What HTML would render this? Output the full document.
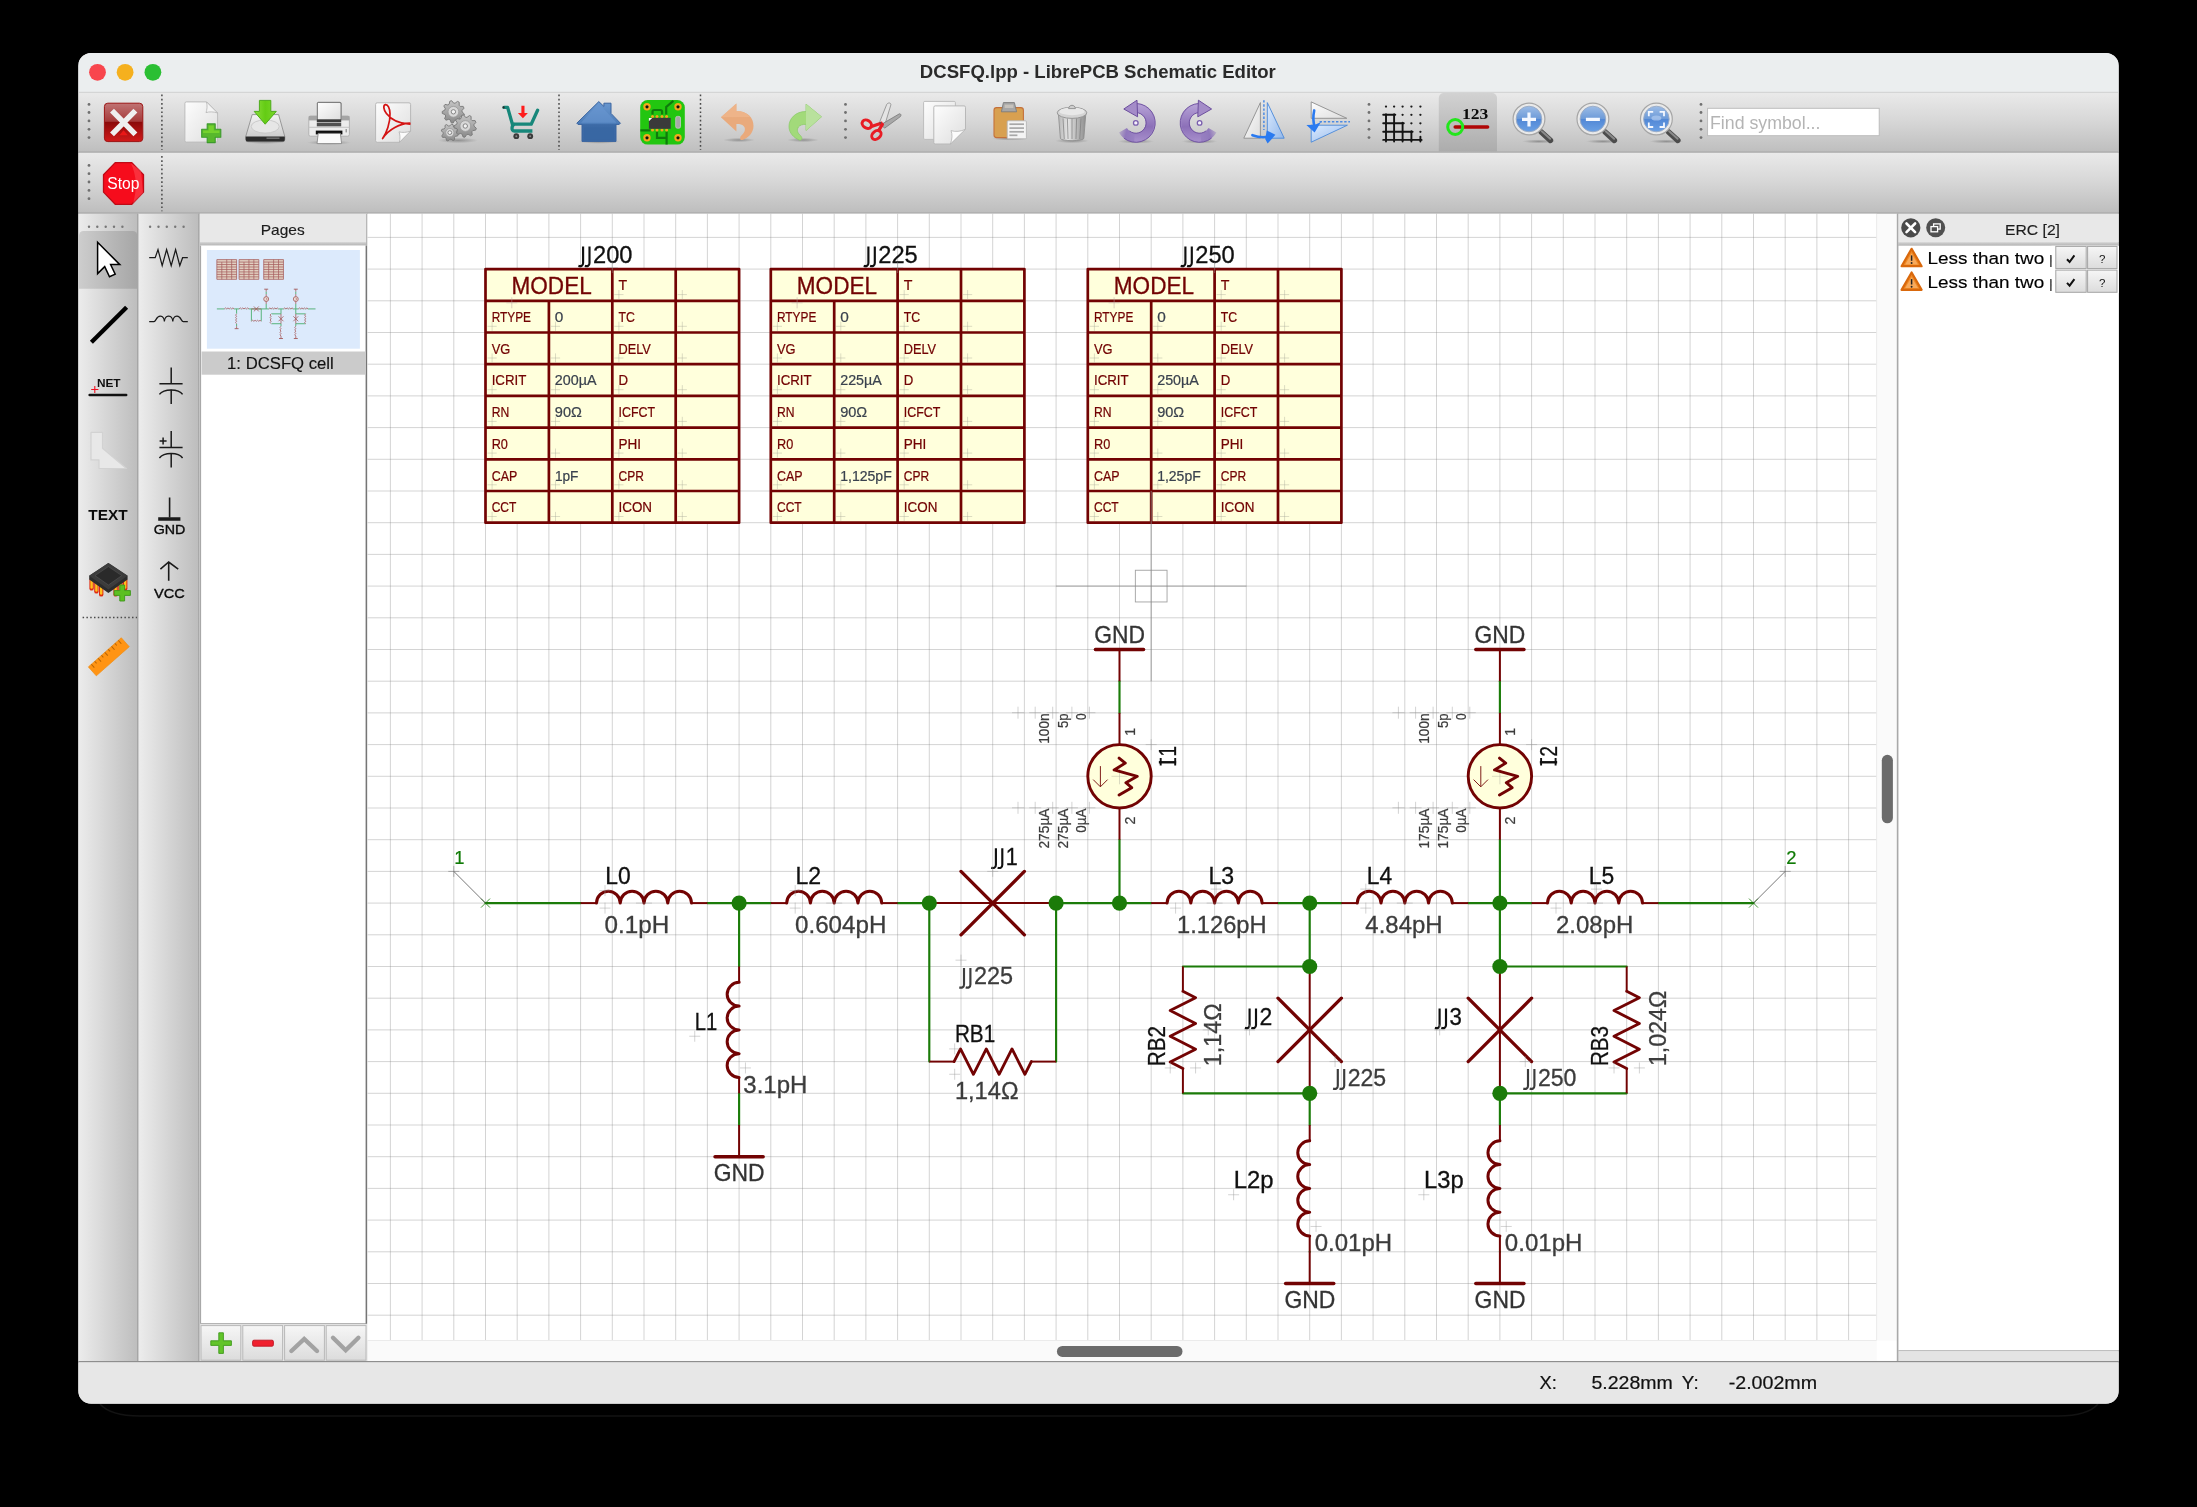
<!DOCTYPE html>
<html><head><meta charset="utf-8"><title>DCSFQ.lpp - LibrePCB Schematic Editor</title>
<style>html,body{margin:0;padding:0;background:#000}svg{display:block;will-change:transform}text{font-family:"Liberation Sans",sans-serif;white-space:pre}</style>
</head><body>
<svg width="2197" height="1507" viewBox="0 0 2197 1507">
<defs>
<clipPath id="win"><rect x="78.2" y="52.9" width="2040.6" height="1350.8" rx="13" ry="13"/></clipPath>
<clipPath id="canvas"><rect x="367.6" y="213.8" width="1509" height="1126.5"/></clipPath>
<linearGradient id="tb" x1="0" y1="0" x2="0" y2="1"><stop offset="0" stop-color="#eaeaea"/><stop offset="0.5" stop-color="#d6d6d6"/><stop offset="1" stop-color="#bebebe"/></linearGradient>
<linearGradient id="tbp" x1="0" y1="0" x2="0" y2="1"><stop offset="0" stop-color="#d2d2d2"/><stop offset="1" stop-color="#acacac"/></linearGradient>
<linearGradient id="lt" x1="0" y1="0" x2="1" y2="0"><stop offset="0" stop-color="#ececec"/><stop offset="1" stop-color="#bdbdbd"/></linearGradient>
<linearGradient id="ltp" x1="0" y1="0" x2="1" y2="0"><stop offset="0" stop-color="#cdcdcd"/><stop offset="1" stop-color="#a6a6a6"/></linearGradient>
<linearGradient id="btn" x1="0" y1="0" x2="0" y2="1"><stop offset="0" stop-color="#f6f6f6"/><stop offset="1" stop-color="#dcdcdc"/></linearGradient>
<linearGradient id="hb" x1="0" y1="0" x2="0" y2="1"><stop offset="0" stop-color="#d0d0d0"/><stop offset="1" stop-color="#b4b4b4"/></linearGradient>
</defs>
<rect width="2197" height="1507" fill="#000"/>
<path d="M100 1404Q110 1415.8 140 1416H2058Q2088 1415.8 2098 1404" stroke="#131313" stroke-width="1.5" fill="none"/>
<g clip-path="url(#win)">
<rect x="78.2" y="52.9" width="2040.6" height="1350.8" fill="#e7e7e7"/>
<rect x="78.2" y="52.9" width="2040.6" height="39.4" fill="#ebeeef"/>
<circle cx="97.5" cy="72.3" r="8.4" fill="#f8464d"/>
<circle cx="125.1" cy="72.3" r="8.4" fill="#f5b01e"/>
<circle cx="152.9" cy="72.3" r="8.4" fill="#2bbf33"/>
<text x="919.85" y="77.8" font-size="18.4" fill="#2a2a2a" textLength="355.98" lengthAdjust="spacingAndGlyphs" font-weight="bold">DCSFQ.lpp - LibrePCB Schematic Editor</text>
<rect x="78.2" y="92.2" width="2040.6" height="60" fill="url(#tb)"/>
<rect x="78.2" y="91.8" width="2040.6" height="1" fill="#cfd0d0"/>
<rect x="78.2" y="151.6" width="2040.6" height="1.2" fill="#a2a2a2"/>
<rect x="78.2" y="152.8" width="2040.6" height="59.4" fill="url(#tb)"/>
<rect x="78.2" y="212.2" width="2040.6" height="1.6" fill="#a6a6a6"/>
<path d="M1438.8 151.6V98a5 5 0 0 1 5-5h48.2a5 5 0 0 1 5 5V151.6Z" fill="url(#tbp)"/>
<circle cx="89" cy="104.4" r="1.4" fill="#707070"/>
<circle cx="89" cy="112.5" r="1.4" fill="#707070"/>
<circle cx="89" cy="120.9" r="1.4" fill="#707070"/>
<circle cx="89" cy="129.3" r="1.4" fill="#707070"/>
<circle cx="89" cy="137.6" r="1.4" fill="#707070"/>
<circle cx="845.5" cy="104.4" r="1.4" fill="#707070"/>
<circle cx="845.5" cy="112.5" r="1.4" fill="#707070"/>
<circle cx="845.5" cy="120.9" r="1.4" fill="#707070"/>
<circle cx="845.5" cy="129.3" r="1.4" fill="#707070"/>
<circle cx="845.5" cy="137.6" r="1.4" fill="#707070"/>
<circle cx="1369" cy="104.4" r="1.4" fill="#707070"/>
<circle cx="1369" cy="112.5" r="1.4" fill="#707070"/>
<circle cx="1369" cy="120.9" r="1.4" fill="#707070"/>
<circle cx="1369" cy="129.3" r="1.4" fill="#707070"/>
<circle cx="1369" cy="137.6" r="1.4" fill="#707070"/>
<circle cx="1701" cy="104.4" r="1.4" fill="#707070"/>
<circle cx="1701" cy="112.5" r="1.4" fill="#707070"/>
<circle cx="1701" cy="120.9" r="1.4" fill="#707070"/>
<circle cx="1701" cy="129.3" r="1.4" fill="#707070"/>
<circle cx="1701" cy="137.6" r="1.4" fill="#707070"/>
<circle cx="89" cy="165.4" r="1.4" fill="#707070"/>
<circle cx="89" cy="173.7" r="1.4" fill="#707070"/>
<circle cx="89" cy="182" r="1.4" fill="#707070"/>
<circle cx="89" cy="190.4" r="1.4" fill="#707070"/>
<circle cx="89" cy="198.7" r="1.4" fill="#707070"/>
<line x1="161.9" y1="94.6" x2="161.9" y2="150" stroke="#484848" stroke-width="1.5" stroke-dasharray="1.7 2.5"/>
<line x1="559" y1="94.6" x2="559" y2="150" stroke="#484848" stroke-width="1.5" stroke-dasharray="1.7 2.5"/>
<line x1="700.5" y1="94.6" x2="700.5" y2="150" stroke="#484848" stroke-width="1.5" stroke-dasharray="1.7 2.5"/>
<line x1="161.9" y1="156" x2="161.9" y2="211.2" stroke="#484848" stroke-width="1.5" stroke-dasharray="1.7 2.5"/>
<rect x="1707.6" y="108.3" width="171.6" height="27.4" fill="#fff" stroke="#b9b9b9" stroke-width="0.9"/>
<text x="1710.04" y="129.3" font-size="18.8" fill="#b4b4b4" textLength="110.41" lengthAdjust="spacingAndGlyphs">Find symbol...</text>
<defs>
<linearGradient id="gPaper" x1="0" y1="0" x2="1" y2="1"><stop offset="0" stop-color="#fdfdfd"/><stop offset="1" stop-color="#dedede"/></linearGradient>
<linearGradient id="gClose" x1="0" y1="0" x2="0" y2="1"><stop offset="0" stop-color="#c07474"/><stop offset="0.47" stop-color="#a63a3a"/><stop offset="0.5" stop-color="#8c0a0a"/><stop offset="1" stop-color="#d21a1a"/></linearGradient>
<linearGradient id="gX" x1="0" y1="0" x2="0" y2="1"><stop offset="0" stop-color="#ffffff"/><stop offset="1" stop-color="#d4d4d4"/></linearGradient>
<linearGradient id="gHdd" x1="0" y1="0" x2="0" y2="1"><stop offset="0" stop-color="#f4f4f4"/><stop offset="1" stop-color="#c4c4c4"/></linearGradient>
<linearGradient id="gGreen" x1="0" y1="0" x2="1" y2="0"><stop offset="0" stop-color="#8ade3a"/><stop offset="0.5" stop-color="#64cc14"/><stop offset="1" stop-color="#7ad62a"/></linearGradient>
<linearGradient id="gPurple" x1="0" y1="0" x2="0" y2="1"><stop offset="0" stop-color="#b8a4d8"/><stop offset="0.6" stop-color="#8c70b8"/><stop offset="1" stop-color="#a890cc"/></linearGradient>
<linearGradient id="gTrash" x1="0" y1="0" x2="1" y2="0"><stop offset="0" stop-color="#b8b8b8"/><stop offset="0.35" stop-color="#e4e4e4"/><stop offset="1" stop-color="#8e8e8e"/></linearGradient>
<linearGradient id="gLens" x1="0" y1="0" x2="0" y2="1"><stop offset="0" stop-color="#9cbce6"/><stop offset="0.5" stop-color="#6c9ad8"/><stop offset="0.52" stop-color="#5288d6"/><stop offset="1" stop-color="#6aa0e4"/></linearGradient>
<linearGradient id="gHome" x1="0" y1="0" x2="0" y2="1"><stop offset="0" stop-color="#6a98d0"/><stop offset="0.55" stop-color="#4c7cb8"/><stop offset="0.58" stop-color="#3c6aa6"/><stop offset="1" stop-color="#3a68a4"/></linearGradient>
<linearGradient id="gBlueTri" x1="0" y1="0" x2="1" y2="1"><stop offset="0" stop-color="#dcebff"/><stop offset="1" stop-color="#94b8ea"/></linearGradient>
<linearGradient id="gGear" x1="0" y1="0" x2="0" y2="1"><stop offset="0" stop-color="#c4c4c4"/><stop offset="1" stop-color="#8a8a8a"/></linearGradient>
<radialGradient id="gShadow"><stop offset="0" stop-color="#000" stop-opacity="0.28"/><stop offset="1" stop-color="#000" stop-opacity="0"/></radialGradient>
</defs>
<rect x="104.4" y="103.2" width="38.4" height="38.4" rx="3.4" fill="url(#gClose)" stroke="#9c1414" stroke-width="1"/>
<path d="M112 110.6L135.4 134.4M135.4 110.6L112 134.4" stroke="#efefef" stroke-width="5.5"/>
<path d="M119.4 135.2L123.6 130.2L127.8 135.2Z" fill="#f01818" opacity="0.9"/>
<path d="M186.4 101.9H206.5L217.6 113V140.6a1.5 1.5 0 0 1-1.5 1.5H186.4a1.5 1.5 0 0 1-1.5-1.5V103.4a1.5 1.5 0 0 1 1.5-1.5Z" fill="url(#gPaper)" stroke="#bcbcbc" stroke-width="1"/>
<path d="M206.5 101.9C207.5 106 207 110 206 112.6C209 111.6 214 111.6 217.6 113Z" fill="#f4f4f4" stroke="#b4b4b4" stroke-width="0.8"/>
<path d="M207.2 123.9H215.2V129.2H220.8V137.3H215.2V142.6H207.2V137.3H201.7V129.2H207.2Z" fill="#58b82c" stroke="#3c9a2c" stroke-width="1.1" stroke-linejoin="round"/>
<path d="M208.6 125.4H213.8V130.6H219.4V133H203.1V130.6H208.6Z" fill="#7ad62e" opacity="0.85"/>
<ellipse cx="265.2" cy="141.5" rx="21" ry="2.6" fill="url(#gShadow)"/>
<path d="M252.2 114.6H278.6L284.8 136.6V139.4a2.2 2.2 0 0 1-2.2 2.2H247.9a2.2 2.2 0 0 1-2.2-2.2V136.6Z" fill="url(#gHdd)" stroke="#8e8e8e" stroke-width="0.9"/>
<path d="M245.7 136.4H284.8V139.4a2.2 2.2 0 0 1-2.2 2.2H247.9a2.2 2.2 0 0 1-2.2-2.2Z" fill="#2c2c2c"/>
<ellipse cx="265.2" cy="126.5" rx="14" ry="6.6" fill="#e6e6e6" stroke="#c4c4c4" stroke-width="0.8"/>
<rect x="266.5" y="137.4" width="13" height="1.6" fill="#6a6a6a"/>
<path d="M259.4 100.4H270.8V111.4H276.3L265.2 124.2L254.2 111.4H259.4Z" fill="url(#gGreen)" stroke="#4eac1c" stroke-width="1" stroke-linejoin="round"/>
<ellipse cx="329" cy="142.6" rx="22" ry="2.4" fill="url(#gShadow)"/>
<rect x="317.4" y="102.4" width="23.6" height="19" rx="1" fill="url(#gPaper)" stroke="#7e7e7e" stroke-width="1"/>
<path d="M310.6 116H347.6a1.8 1.8 0 0 1 1.8 1.8V134.4a1.8 1.8 0 0 1-1.8 1.8H310.6a1.8 1.8 0 0 1-1.8-1.8V117.8a1.8 1.8 0 0 1 1.8-1.8Z" fill="#ececec" stroke="#a8a8a8" stroke-width="0.8"/>
<rect x="308.8" y="116" width="40.6" height="4.4" fill="#a4a4a4"/>
<rect x="317.4" y="104" width="23.6" height="15.8" fill="url(#gPaper)"/>
<rect x="317.4" y="102.4" width="23.6" height="17.8" rx="1" fill="none" stroke="#7e7e7e" stroke-width="1"/>
<rect x="316.8" y="119.4" width="24.4" height="2.6" fill="#3a3a3a"/>
<rect x="316.8" y="122.6" width="24.4" height="3.8" fill="#505050"/>
<rect x="308.8" y="126.8" width="40.6" height="1" fill="#c4c4c4"/>
<rect x="315.8" y="130.6" width="26.6" height="3.8" fill="#0e0e0e"/>
<path d="M318.2 133.4H340.4L341.6 143.6H317Z" fill="#fafafa" stroke="#8a8a8a" stroke-width="0.9"/>
<rect x="345.6" y="129" width="1.2" height="3.4" fill="#8a8a8a"/>
<path d="M377.2 102.8H409a1.6 1.6 0 0 1 1.6 1.6V131L399.4 142.3H377.2a1.6 1.6 0 0 1-1.6-1.6V104.4a1.6 1.6 0 0 1 1.6-1.6Z" fill="url(#gPaper)" stroke="#b8b8b8" stroke-width="1"/>
<path d="M399.4 142.3C400.4 138.4 400 134.4 399 131.8C402 132.8 407 132.6 410.6 131Z" fill="#fbfbfb" stroke="#b0b0b0" stroke-width="0.8"/>
<path d="M382.6 138.6C386.4 133.2 390.4 123 390 113.6C389.8 108 387.8 104.2 385.4 104.6C383 105.2 383.4 109.6 386.4 113.6C391.6 120.4 401 123.8 409.8 124.2M409.8 123.2C400 123.4 388.6 129.6 383 138" fill="none" stroke="#d41414" stroke-width="1.7" stroke-linecap="round"/>
<ellipse cx="458" cy="140.4" rx="20" ry="2.8" fill="url(#gShadow)"/>
<path d="M464.4 114.0 L463.8 115.9 L460.9 116.4 L459.9 117.6 L460.4 120.6 L458.8 121.6 L456.2 120.1 L454.7 120.4 L453.1 123.0 L451.2 122.8 L450.2 119.9 L448.8 119.3 L446.0 120.2 L444.6 118.8 L445.7 116.0 L445.1 114.6 L442.3 113.5 L442.2 111.5 L444.8 110.1 L445.3 108.6 L443.8 106.0 L445.0 104.4 L448.0 105.0 L449.2 104.1 L449.8 101.2 L451.7 100.7 L453.6 103.1 L455.1 103.2 L457.5 101.4 L459.2 102.2 L459.2 105.3 L460.2 106.4 L463.2 106.4 L464.0 108.2 L462.0 110.5 L462.1 112.0 Z" fill="url(#gGear)" stroke="#777" stroke-width="0.9" stroke-linejoin="round"/>
<circle cx="453.4" cy="111.8" r="5.3759999999999994" fill="#d8d8d8" stroke="#9a9a9a" stroke-width="0.8"/>
<circle cx="453.4" cy="111.8" r="2.2" fill="#f2f2f2" stroke="#7a7a7a" stroke-width="0.9"/>
<path d="M458.2 134.3 L457.7 135.9 L455.4 136.3 L454.5 137.4 L454.6 139.8 L453.1 140.6 L451.1 139.2 L449.8 139.3 L448.1 141.0 L446.5 140.5 L446.1 138.2 L445.0 137.3 L442.6 137.4 L441.8 135.9 L443.2 133.9 L443.1 132.6 L441.4 130.9 L441.9 129.3 L444.2 128.9 L445.1 127.8 L445.0 125.4 L446.5 124.6 L448.5 126.0 L449.8 125.9 L451.5 124.2 L453.1 124.7 L453.5 127.0 L454.6 127.9 L457.0 127.8 L457.8 129.3 L456.4 131.3 L456.5 132.6 Z" fill="url(#gGear)" stroke="#777" stroke-width="0.9" stroke-linejoin="round"/>
<circle cx="449.8" cy="132.6" r="4.128" fill="#d8d8d8" stroke="#9a9a9a" stroke-width="0.8"/>
<circle cx="449.8" cy="132.6" r="1.9" fill="#f2f2f2" stroke="#7a7a7a" stroke-width="0.9"/>
<path d="M476.3 128.2 L475.7 130.1 L472.8 130.6 L471.8 131.8 L472.3 134.8 L470.7 135.8 L468.1 134.3 L466.6 134.6 L465.0 137.2 L463.1 137.0 L462.1 134.1 L460.7 133.5 L457.9 134.4 L456.5 133.0 L457.6 130.2 L457.0 128.8 L454.2 127.7 L454.1 125.7 L456.7 124.3 L457.2 122.8 L455.7 120.2 L456.9 118.6 L459.9 119.2 L461.1 118.3 L461.7 115.4 L463.6 114.9 L465.5 117.3 L467.0 117.4 L469.4 115.6 L471.1 116.4 L471.1 119.5 L472.1 120.6 L475.1 120.6 L475.9 122.4 L473.9 124.7 L474.0 126.2 Z" fill="url(#gGear)" stroke="#777" stroke-width="0.9" stroke-linejoin="round"/>
<circle cx="465.3" cy="126" r="5.3759999999999994" fill="#d8d8d8" stroke="#9a9a9a" stroke-width="0.8"/>
<circle cx="465.3" cy="126" r="2.2" fill="#f2f2f2" stroke="#7a7a7a" stroke-width="0.9"/>
<path d="M504 107.4H507.6L512.4 124.2H531.2L537.6 110.2" fill="none" stroke="#17877a" stroke-width="3.3" stroke-linecap="round" stroke-linejoin="round"/>
<path d="M514.6 124.2C511.6 125 510.8 131 514.4 131H532.4" fill="none" stroke="#17877a" stroke-width="3.3" stroke-linecap="butt"/>
<circle cx="503.6" cy="107.4" r="1.1" fill="#2a2a2a"/>
<circle cx="516.3" cy="136.2" r="2.9" fill="#3a3a3a"/><circle cx="516.3" cy="136.2" r="1" fill="#8a8a8a"/>
<circle cx="530.2" cy="136.2" r="2.9" fill="#3a3a3a"/><circle cx="530.2" cy="136.2" r="1" fill="#8a8a8a"/>
<path d="M521.4 105.8H524.5V113H527.9L522.9 118.3L517.9 113H521.4Z" fill="#ff1c1c"/>
<ellipse cx="599" cy="141.6" rx="21" ry="2.2" fill="url(#gShadow)"/>
<path d="M598.8 101.6L603.9 106.4V103.2H611V113.4L620.4 123.2L619.2 124.4H616V141.4H582V124.4H578L576.8 123.2Z" fill="url(#gHome)" stroke="#3a64a0" stroke-width="1" stroke-linejoin="round"/>
<path d="M598.8 103.6L581 122.8H616.6Z" fill="#6a98d2" opacity="0.55"/>
<rect x="584.2" y="127.4" width="29.6" height="12" fill="#3866a2" opacity="0.7"/>
<rect x="640.2" y="100" width="44.6" height="44.6" rx="7.5" fill="#22c610"/>
<path d="M673.4 100.8L666.2 107V114.6M652.5 114.6V111.8a1.8 1.8 0 0 1 1.8-1.8H660.3a1.8 1.8 0 0 1 1.8 1.8V114.6M640.4 130.4H650.4M657 131.6V137.8H666.6M666.6 131.6V144.4" fill="none" stroke="#0f7a0c" stroke-width="2.2"/>
<circle cx="647" cy="106.8" r="3.7" fill="#f4a81c"/><circle cx="647" cy="106.8" r="1.6" fill="#111"/>
<circle cx="678" cy="106.8" r="3.7" fill="#f4a81c"/><circle cx="678" cy="106.8" r="1.6" fill="#111"/>
<circle cx="647" cy="137.8" r="3.7" fill="#f4a81c"/><circle cx="647" cy="137.8" r="1.6" fill="#111"/>
<circle cx="678" cy="137.8" r="3.7" fill="#f4a81c"/><circle cx="678" cy="137.8" r="1.6" fill="#111"/>
<circle cx="652.5" cy="116.6" r="1.5" fill="#f4a81c"/><circle cx="652.5" cy="130" r="1.5" fill="#f4a81c"/>
<circle cx="657" cy="116.6" r="1.5" fill="#f4a81c"/><circle cx="657" cy="130" r="1.5" fill="#f4a81c"/>
<circle cx="662" cy="116.6" r="1.5" fill="#f4a81c"/><circle cx="662" cy="130" r="1.5" fill="#f4a81c"/>
<circle cx="666.6" cy="116.6" r="1.5" fill="#f4a81c"/><circle cx="666.6" cy="130" r="1.5" fill="#f4a81c"/>
<rect x="648.9" y="117.9" width="21.8" height="10.9" fill="#3a3a3a"/>
<path d="M648.9 117.9H652.2L648.9 121.2Z" fill="#fff"/>
<rect x="675.7" y="116.4" width="4.8" height="11.8" rx="1.6" fill="#a8a8a8" stroke="#c8c8c8" stroke-width="0.8"/>
<ellipse cx="739" cy="140" rx="16" ry="2.2" fill="url(#gShadow)"/>
<ellipse cx="803" cy="140" rx="16" ry="2.2" fill="url(#gShadow)"/>
<path d="M720.9 117.3L736.4 103.6V111C748 111 753.5 118 753.5 126C753.5 133 748 138 742.5 140C740 140.6 739.5 137.6 741 136C744.6 133 746 129.4 744 126.6C742.6 124.6 740 124 736.4 124V131.4Z" fill="#e9aa7c"/>
<path d="M720.9 117.3L736.4 103.6V111C742 111 747 113 750 117Z" fill="#efb88e" opacity="0.7"/>
<path d="M821.5 116.8L806 104.1V111.5C795 111.5 789 119 789 126.5C789 133 794 138 799.5 140C802 140.6 802.5 137.8 801 136.2C797.4 133 796.4 130 798.4 127C800 125 802.5 124.3 806 124.3V130.5Z" fill="#a2da7a" stroke="#8ccc68" stroke-width="0.8"/>
<path d="M821.5 116.8L806 104.1V130.5Z" fill="#bfe2a6" opacity="0.8"/>
<path d="M879 123.6L886.8 104.2C888.2 102.4 891 102.6 890.9 104.8L884.6 125.6Z" fill="#e4e4e4" stroke="#8a8a8a" stroke-width="0.8"/>
<path d="M881 124.6L899.4 113.8C901 113.6 901.4 115.4 900.4 116.6L884.6 128.2Z" fill="#a8a8a8" stroke="#7a7a7a" stroke-width="0.8"/>
<ellipse cx="866.8" cy="124.2" rx="5" ry="3.8" transform="rotate(35 866.8 124.2)" fill="none" stroke="#e81c24" stroke-width="3"/>
<ellipse cx="876.4" cy="135" rx="5.2" ry="3.8" transform="rotate(-40 876.4 135)" fill="none" stroke="#e81c24" stroke-width="3"/>
<path d="M871.4 126.6L881.2 123.2M878.6 130.6L882.4 124.4" stroke="#e81c24" stroke-width="3.2" stroke-linecap="round"/>
<circle cx="880.4" cy="122.8" r="0.9" fill="#555"/>
<rect x="923.6" y="101.4" width="31.8" height="38" rx="1.2" fill="url(#gPaper)" stroke="#bdbdbd" stroke-width="1"/>
<path d="M935.2 105.9H964.1a1.4 1.4 0 0 1 1.4 1.4V129.2L950.4 144H935.2a1.4 1.4 0 0 1-1.4-1.4V107.3a1.4 1.4 0 0 1 1.4-1.4Z" fill="url(#gPaper)" stroke="#b8b8b8" stroke-width="1"/>
<path d="M950.4 144C952.4 139 952.4 134 951 130.6C955 132 961 131.6 965.5 129.2Z" fill="#fcfcfc" stroke="#b4b4b4" stroke-width="0.8"/>
<ellipse cx="1010" cy="138.6" rx="18" ry="2" fill="url(#gShadow)"/>
<rect x="994" y="107.6" width="29.4" height="30" rx="2.6" fill="#d8a050" stroke="#c4703a" stroke-width="1.1"/>
<path d="M1003.4 102.6H1014.4L1016.6 111.8H1001.4Z" fill="#a6a6a6" stroke="#7c7c7c" stroke-width="0.9" stroke-linejoin="round"/>
<rect x="1004.6" y="104.6" width="8.8" height="3.4" fill="#c6c2bc"/>
<rect x="1007.2" y="120.8" width="19.2" height="18" rx="1" fill="#f4f4f4" stroke="#b6b6b6" stroke-width="0.9"/>
<rect x="1009.4" y="123.35000000000001" width="14.600000000000023" height="1.7" fill="#a8a8a8"/>
<rect x="1009.4" y="127.25" width="14.600000000000023" height="1.7" fill="#a8a8a8"/>
<rect x="1009.4" y="130.95000000000002" width="14.600000000000023" height="1.7" fill="#a8a8a8"/>
<rect x="1009.4" y="134.45000000000002" width="8.0" height="1.7" fill="#a8a8a8"/>
<ellipse cx="1072" cy="140.8" rx="17" ry="2.4" fill="url(#gShadow)"/>
<path d="M1058.4 114H1085.8L1083.8 138.4C1083.4 141.4 1060.8 141.4 1060.4 138.4Z" fill="url(#gTrash)" stroke="#8a8a8a" stroke-width="0.8"/>
<path d="M1063 118.4L1064.26 139" stroke="#7c7c7c" stroke-width="1" opacity="0.7"/>
<path d="M1067.4 118.4L1068.044 139" stroke="#7c7c7c" stroke-width="1" opacity="0.7"/>
<path d="M1072 118.4L1072.0 139" stroke="#7c7c7c" stroke-width="1" opacity="0.7"/>
<path d="M1076.6 118.4L1075.956 139" stroke="#7c7c7c" stroke-width="1" opacity="0.7"/>
<path d="M1081 118.4L1079.74 139" stroke="#7c7c7c" stroke-width="1" opacity="0.7"/>
<ellipse cx="1072" cy="112.8" rx="14.8" ry="5.6" fill="#d4d4d4" stroke="#909090" stroke-width="0.9"/>
<ellipse cx="1072" cy="111.4" rx="12.6" ry="3.8" fill="#e8e8e8"/>
<path d="M1068.6 108.6C1069 104.2 1075 104.2 1075.4 108.6Z" fill="#cfcfcf" stroke="#8c8c8c" stroke-width="0.9"/>
<ellipse cx="1136" cy="141.4" rx="18" ry="2.2" fill="url(#gShadow)"/>
<ellipse cx="1199.6" cy="141.4" rx="18" ry="2.2" fill="url(#gShadow)"/>
<defs><linearGradient id="gRot0" gradientUnits="userSpaceOnUse" x1="1116.8" y1="126.9" x2="1139.8" y2="132.9"><stop offset="0" stop-color="#8c70b8" stop-opacity="0"/><stop offset="0.45" stop-color="#9078bc" stop-opacity="1"/><stop offset="1" stop-color="#9c84c4"/></linearGradient></defs>
<path d="M1136.5 103.5A19.4 19.4 0 1 1 1119.0 132.6L1126.9 128.1A10.3 10.3 0 1 0 1136.2 112.6Z" fill="url(#gRot0)"/>
<path d="M1136.5 103.5A19.4 19.4 0 0 1 1134.1 142.2L1134.9 133.2A10.3 10.3 0 0 0 1136.2 112.6Z" fill="url(#gPurple)"/>
<path d="M1136.5 103.5A19.4 19.4 0 1 1 1123.9 138.2M1129.5 131.0A10.3 10.3 0 1 0 1136.2 112.6" fill="none" stroke="#6c4e9e" stroke-width="1" stroke-opacity="0.9"/>
<path d="M1137.0 100.2L1123.8 109.0L1137.6 116.8Z" fill="#a48cc8" stroke="#6c4e9e" stroke-width="1" stroke-linejoin="round"/>
<circle cx="1135.8" cy="122.9" r="2.3" fill="#f4f0fa" stroke="#7a5eae" stroke-width="1.3"/>
<defs><linearGradient id="gRot1" gradientUnits="userSpaceOnUse" x1="1218.6" y1="126.9" x2="1195.6" y2="132.9"><stop offset="0" stop-color="#8c70b8" stop-opacity="0"/><stop offset="0.45" stop-color="#9078bc" stop-opacity="1"/><stop offset="1" stop-color="#9c84c4"/></linearGradient></defs>
<path d="M1198.9 103.5A19.4 19.4 0 1 0 1216.4 132.6L1208.5 128.1A10.3 10.3 0 1 1 1199.2 112.6Z" fill="url(#gRot1)"/>
<path d="M1198.9 103.5A19.4 19.4 0 0 0 1201.3 142.2L1200.5 133.2A10.3 10.3 0 0 1 1199.2 112.6Z" fill="url(#gPurple)"/>
<path d="M1198.9 103.5A19.4 19.4 0 1 0 1211.5 138.2M1205.9 131.0A10.3 10.3 0 1 1 1199.2 112.6" fill="none" stroke="#6c4e9e" stroke-width="1" stroke-opacity="0.9"/>
<path d="M1198.4 100.2L1211.6 109.0L1197.8 116.8Z" fill="#a48cc8" stroke="#6c4e9e" stroke-width="1" stroke-linejoin="round"/>
<circle cx="1199.6" cy="122.9" r="2.3" fill="#f4f0fa" stroke="#7a5eae" stroke-width="1.3"/>
<path d="M1260.4 102.6V138.2H1243.8Z" fill="url(#gPaper)" stroke="#8c8c8c" stroke-width="0.9" stroke-linejoin="round"/>
<path d="M1267.3 102.6V138.2H1284.2Z" fill="url(#gBlueTri)" stroke="#4a88d8" stroke-width="0.9" stroke-linejoin="round"/>
<path d="M1263.9 100.2V130" stroke="#4a8ae4" stroke-width="1.5" stroke-dasharray="2.4 1.7"/>
<path d="M1252.4 135.2C1258 137.2 1264 137.6 1268.6 136.6" fill="none" stroke="#2a7af0" stroke-width="2.6" stroke-linecap="round"/>
<path d="M1266.8 130.4L1275.4 134.8L1267.6 143.6L1265.2 139Z" fill="#2a7af0"/>
<path d="M1311.2 101.9V118.3H1346.8Z" fill="url(#gPaper)" stroke="#8c8c8c" stroke-width="0.9" stroke-linejoin="round"/>
<path d="M1311.2 125.2H1347.4L1311.2 142.2Z" fill="url(#gBlueTri)" stroke="#4a88d8" stroke-width="0.9" stroke-linejoin="round"/>
<path d="M1319.6 121.7H1350" stroke="#4a8ae4" stroke-width="1.5" stroke-dasharray="2.4 1.7"/>
<path d="M1314.2 110.4C1313 116 1313.2 122 1314.6 126.6" fill="none" stroke="#2a7af0" stroke-width="2.6" stroke-linecap="round"/>
<path d="M1306.4 125L1314.6 132.6L1321 122L1315 124.8Z" fill="#2a7af0"/>
<circle cx="1386" cy="106.6" r="1.15" fill="#1a1a1a"/>
<circle cx="1386" cy="114.8" r="1.15" fill="#1a1a1a"/>
<circle cx="1386" cy="123.3" r="1.15" fill="#1a1a1a"/>
<circle cx="1386" cy="131.8" r="1.15" fill="#1a1a1a"/>
<circle cx="1386" cy="139.9" r="1.15" fill="#1a1a1a"/>
<circle cx="1394.1" cy="106.6" r="1.15" fill="#1a1a1a"/>
<circle cx="1394.1" cy="114.8" r="1.15" fill="#1a1a1a"/>
<circle cx="1394.1" cy="123.3" r="1.15" fill="#1a1a1a"/>
<circle cx="1394.1" cy="131.8" r="1.15" fill="#1a1a1a"/>
<circle cx="1394.1" cy="139.9" r="1.15" fill="#1a1a1a"/>
<circle cx="1402.6" cy="106.6" r="1.15" fill="#1a1a1a"/>
<circle cx="1402.6" cy="114.8" r="1.15" fill="#1a1a1a"/>
<circle cx="1402.6" cy="123.3" r="1.15" fill="#1a1a1a"/>
<circle cx="1402.6" cy="131.8" r="1.15" fill="#1a1a1a"/>
<circle cx="1402.6" cy="139.9" r="1.15" fill="#1a1a1a"/>
<circle cx="1411.4" cy="106.6" r="1.15" fill="#1a1a1a"/>
<circle cx="1411.4" cy="114.8" r="1.15" fill="#1a1a1a"/>
<circle cx="1411.4" cy="123.3" r="1.15" fill="#1a1a1a"/>
<circle cx="1411.4" cy="131.8" r="1.15" fill="#1a1a1a"/>
<circle cx="1411.4" cy="139.9" r="1.15" fill="#1a1a1a"/>
<circle cx="1420.4" cy="106.6" r="1.15" fill="#1a1a1a"/>
<circle cx="1420.4" cy="114.8" r="1.15" fill="#1a1a1a"/>
<circle cx="1420.4" cy="123.3" r="1.15" fill="#1a1a1a"/>
<circle cx="1420.4" cy="131.8" r="1.15" fill="#1a1a1a"/>
<circle cx="1420.4" cy="139.9" r="1.15" fill="#1a1a1a"/>
<path d="M1383.2 114.8H1395.3M1383.2 123.3H1403.8M1383.2 131.8H1412.6000000000001M1383.2 139.9H1421.6000000000001M1386 114.3V141.6M1394.1 114.3V141.6M1402.6 122.8V141.6M1411.4 131.3V141.6M1420.4 136.6V141.6" stroke="#141414" stroke-width="1.9" fill="none" stroke-linecap="round"/>
<text x="1462.1" y="118.9" font-size="14.8" font-weight="bold" fill="#0a0a0a" textLength="26.3" lengthAdjust="spacingAndGlyphs" style="font-family:'Liberation Serif',serif">123</text>
<path d="M1455.2 127H1487.6" stroke="#b00606" stroke-width="3.5" stroke-linecap="round"/>
<circle cx="1455.2" cy="127" r="7.5" fill="none" stroke="#22e61c" stroke-width="3"/>
<ellipse cx="1539" cy="141.4" rx="17" ry="2" fill="url(#gShadow)"/>
<path d="M1541.2 132L1550.4 140.4" stroke="#4c4c4c" stroke-width="5.6" stroke-linecap="round"/>
<path d="M1541.8 131.2L1550.2 138.8" stroke="#8a8a8a" stroke-width="2" stroke-linecap="round"/>
<circle cx="1529" cy="119" r="15.9" fill="#e9e9e9" stroke="#a6a6a6" stroke-width="1.2"/>
<circle cx="1529" cy="119" r="12.8" fill="url(#gLens)" stroke="#9aaac4" stroke-width="0.9"/>
<path d="M1522 119.4H1536M1529 112.4V126.4" stroke="#f4f8ff" stroke-width="3.2"/>
<ellipse cx="1602.9" cy="141.4" rx="17" ry="2" fill="url(#gShadow)"/>
<path d="M1605.1000000000001 132L1614.3000000000002 140.4" stroke="#4c4c4c" stroke-width="5.6" stroke-linecap="round"/>
<path d="M1605.7 131.2L1614.1000000000001 138.8" stroke="#8a8a8a" stroke-width="2" stroke-linecap="round"/>
<circle cx="1592.9" cy="119" r="15.9" fill="#e9e9e9" stroke="#a6a6a6" stroke-width="1.2"/>
<circle cx="1592.9" cy="119" r="12.8" fill="url(#gLens)" stroke="#9aaac4" stroke-width="0.9"/>
<path d="M1585.9 119.4H1599.9" stroke="#f4f8ff" stroke-width="3.2"/>
<ellipse cx="1666.4" cy="141.4" rx="17" ry="2" fill="url(#gShadow)"/>
<path d="M1668.6000000000001 132L1677.8000000000002 140.4" stroke="#4c4c4c" stroke-width="5.6" stroke-linecap="round"/>
<path d="M1669.2 131.2L1677.6000000000001 138.8" stroke="#8a8a8a" stroke-width="2" stroke-linecap="round"/>
<circle cx="1656.4" cy="119" r="15.9" fill="#e9e9e9" stroke="#a6a6a6" stroke-width="1.2"/>
<circle cx="1656.4" cy="119" r="12.8" fill="url(#gLens)" stroke="#9aaac4" stroke-width="0.9"/>
<path d="M1648.8000000000002 116.2V111.80000000000001H1653.2M1648.8000000000002 122.60000000000001V127.0H1653.2M1664.0 116.2V111.80000000000001H1659.6000000000001M1664.0 122.60000000000001V127.0H1659.6000000000001" stroke="#f4f8ff" stroke-width="1.8" fill="none"/>
<ellipse cx="1656.4" cy="118" rx="5" ry="2.6" fill="#a8c4ec" opacity="0.8"/>
<path d="M143.5 192.1 L131.8 204.3 L115.2 204.3 L103.5 192.1 L103.5 174.8 L115.2 162.6 L131.8 162.6 L143.5 174.8Z" fill="#f60c1c" stroke="#bf0a16" stroke-width="1.3" stroke-linejoin="round"/>
<path d="M131 163.5L141 170.5L143 193L133 203.6C137 190 137 176 131 163.5Z" fill="#ff5a64" opacity="0.45"/>
<text x="107.2" y="188.7" font-size="16.4" fill="#fff" textLength="32.2" lengthAdjust="spacingAndGlyphs">Stop</text>
<rect x="78.2" y="213.8" width="59.8" height="1148" fill="url(#lt)"/>
<rect x="138" y="213.8" width="1.2" height="1148" fill="#f2f2f2"/>
<rect x="139.2" y="213.8" width="59.4" height="1148" fill="url(#lt)"/>
<rect x="137" y="213.8" width="1.5" height="1148" fill="#a6a6a6"/>
<rect x="198.2" y="213.8" width="1.6" height="1148" fill="#a0a0a0"/>
<path d="M79 288.8V235.4a4.5 4.5 0 0 1 4.5-4.5h49.3a4.5 4.5 0 0 1 4.5 4.5V288.8Z" fill="url(#ltp)"/>
<circle cx="89" cy="226.7" r="1.2" fill="#777"/>
<circle cx="97.3" cy="226.7" r="1.2" fill="#777"/>
<circle cx="105.7" cy="226.7" r="1.2" fill="#777"/>
<circle cx="114" cy="226.7" r="1.2" fill="#777"/>
<circle cx="122.4" cy="226.7" r="1.2" fill="#777"/>
<circle cx="150.1" cy="226.7" r="1.2" fill="#777"/>
<circle cx="158.5" cy="226.7" r="1.2" fill="#777"/>
<circle cx="166.8" cy="226.7" r="1.2" fill="#777"/>
<circle cx="175.2" cy="226.7" r="1.2" fill="#777"/>
<circle cx="183.6" cy="226.7" r="1.2" fill="#777"/>
<line x1="82.6" y1="617.5" x2="137" y2="617.5" stroke="#4a4a4a" stroke-width="1.3" stroke-dasharray="1.5 2.3"/>
<path d="M97.6 242.3V273.6L104.7 266.6L109.5 276.8L115.2 274.2L110.6 264.6H119.8Z" fill="#fff" stroke="#000" stroke-width="1.5" stroke-linejoin="miter"/>
<path d="M91.4 342.2L126.6 307.2" stroke="#000" stroke-width="4.3"/>
<text x="96.9" y="387.3" font-size="10.6" font-weight="bold" fill="#111" textLength="23.7" lengthAdjust="spacingAndGlyphs">NET</text>
<path d="M91.2 389.5H98.4M94.8 385.9V393.1" stroke="#f01020" stroke-width="1.1"/>
<path d="M89.6 395H126.2" stroke="#111" stroke-width="2.5" stroke-linecap="round"/>
<path d="M91 432.3H102.5V448.3L126.4 468.5H99V459.9H91Z" fill="#e8e8e8" stroke="#d2d2d2" stroke-width="1.2" stroke-linejoin="round"/>
<text x="88.3" y="519.8" font-size="14.8" font-weight="bold" fill="#0a0a0a" textLength="39.3" lengthAdjust="spacingAndGlyphs">TEXT</text>
<path d="M91.6 580V588.4" stroke="#e02c10" stroke-width="4.4" stroke-linecap="round"/>
<path d="M91.6 580V587.6" stroke="#ffc020" stroke-width="2.4" stroke-linecap="round"/>
<path d="M96.4 583V591.4" stroke="#e02c10" stroke-width="4.4" stroke-linecap="round"/>
<path d="M96.4 583V590.6" stroke="#ffc020" stroke-width="2.4" stroke-linecap="round"/>
<path d="M101.2 586V594.4" stroke="#e02c10" stroke-width="4.4" stroke-linecap="round"/>
<path d="M101.2 586V593.6" stroke="#ffc020" stroke-width="2.4" stroke-linecap="round"/>
<path d="M125.2 580V588.4" stroke="#e02c10" stroke-width="4.4" stroke-linecap="round"/>
<path d="M125.2 580V587.6" stroke="#ffc020" stroke-width="2.4" stroke-linecap="round"/>
<path d="M120.4 583V591.4" stroke="#e02c10" stroke-width="4.4" stroke-linecap="round"/>
<path d="M120.4 583V590.6" stroke="#ffc020" stroke-width="2.4" stroke-linecap="round"/>
<path d="M115.6 586V594.4" stroke="#e02c10" stroke-width="4.4" stroke-linecap="round"/>
<path d="M115.6 586V593.6" stroke="#ffc020" stroke-width="2.4" stroke-linecap="round"/>
<path d="M89.2 575.8L108.4 563L127.6 575.8V579.4L108.4 593L89.2 579.4Z" fill="#2c2c2c"/>
<path d="M89.2 575.8L108.4 563L127.6 575.8L108.4 589.4Z" fill="#3c3c3c"/>
<path d="M95 575.6L108.4 566.6L121.8 575.6L108.4 585Z" fill="#2a2a2a" stroke="#555" stroke-width="0.6"/>
<path d="M119.8 585H124.6V590.6H130.4V595.4H124.6V601H119.8V595.4H114.2V590.6H119.8Z" fill="#5cc022" stroke="#3c961a" stroke-width="0.9" stroke-linejoin="round"/>
<g transform="translate(108.8 656.8) rotate(-41.5)"><rect x="-22" y="-6" width="44" height="12" fill="#ff9414" stroke="#f08a0c" stroke-width="0.6"/>
<path d="M-18.0 -6V-1.5" stroke="#b86404" stroke-width="1"/>
<path d="M-13.5 -6V-3.2" stroke="#b86404" stroke-width="1"/>
<path d="M-9.0 -6V-1.5" stroke="#b86404" stroke-width="1"/>
<path d="M-4.5 -6V-3.2" stroke="#b86404" stroke-width="1"/>
<path d="M0.0 -6V-1.5" stroke="#b86404" stroke-width="1"/>
<path d="M4.5 -6V-3.2" stroke="#b86404" stroke-width="1"/>
<path d="M9.0 -6V-1.5" stroke="#b86404" stroke-width="1"/>
<path d="M13.5 -6V-3.2" stroke="#b86404" stroke-width="1"/>
<path d="M18.0 -6V-1.5" stroke="#b86404" stroke-width="1"/>
</g>
<path d="M149.2 257.7H155.2L158 249.6L162.2 265.6L166.6 249.6L171.2 265.6L175.6 249.6L179.8 265.6L182.6 257.7H187.8" fill="none" stroke="#1a1a1a" stroke-width="1.25" stroke-linejoin="miter"/>
<path d="M149.2 321.6H154C156 321.6 156.2 316.2 160.2 316.2C164.2 316.2 164.4 321.6 164.4 321.6C164.4 321.6 164.6 316.2 168.6 316.2C172.6 316.2 172.8 321.6 172.8 321.6C172.8 321.6 173 316.2 177 316.2C181 316.2 181.2 321.6 183.2 321.6H187.8" fill="none" stroke="#1a1a1a" stroke-width="1.25"/>
<path d="M171.2 367.4V383.59999999999997M159.4 383.79999999999995H182.6M171.2 389.79999999999995V404.0" stroke="#1a1a1a" stroke-width="1.5" fill="none"/>
<path d="M159.4 394.4C164 388.4 178.4 388.4 182.6 394.4" stroke="#1a1a1a" stroke-width="1.5" fill="none"/>
<path d="M171.2 431V447.2M159.4 447.4H182.6M171.2 453.4V467.6" stroke="#1a1a1a" stroke-width="1.5" fill="none"/>
<path d="M159.4 458C164 452 178.4 452 182.6 458" stroke="#1a1a1a" stroke-width="1.5" fill="none"/>
<path d="M159.6 441H166.6M163.1 437.5V444.5" stroke="#1a1a1a" stroke-width="1.5"/>
<path d="M169.6 497.5V517.6" stroke="#1a1a1a" stroke-width="1.6"/><path d="M158.2 519H180.4" stroke="#1a1a1a" stroke-width="3.5"/>
<text x="153.7" y="534.4" font-size="12.6" fill="#0a0a0a" stroke="#0a0a0a" stroke-width="0.35" textLength="31.7" lengthAdjust="spacingAndGlyphs">GND</text>
<path d="M168.7 562.4V580.8M160.4 569.2L168.7 562L178.2 569.2" stroke="#1a1a1a" stroke-width="1.6" fill="none"/>
<text x="154" y="597.5" font-size="13.4" fill="#0a0a0a" stroke="#0a0a0a" stroke-width="0.35" textLength="30.8" lengthAdjust="spacingAndGlyphs">VCC</text>
<rect x="199.6" y="213.8" width="167.6" height="1148" fill="#e7e7e7"/>
<rect x="200" y="213.8" width="167" height="28.4" fill="#e8e8e8"/>
<rect x="200" y="242.2" width="167" height="3.4" fill="url(#hb)"/>
<text x="260.76" y="234.6" font-size="14.5" fill="#1c1c1c" stroke="#1c1c1c" stroke-width="0.15" textLength="43.89" lengthAdjust="spacingAndGlyphs">Pages</text>
<rect x="200" y="245.6" width="166" height="1078.4" fill="#fff"/>
<rect x="200" y="245.6" width="1.1" height="1078.4" fill="#a8a8a8"/>
<rect x="200" y="1323" width="167" height="1.1" fill="#b4b4b4"/>
<rect x="365.6" y="245.6" width="1.7" height="1078" fill="#767676"/>
<rect x="366.1" y="213.8" width="1.6" height="31.8" fill="#b2b2b2"/>
<rect x="206.9" y="250" width="153" height="98.7" fill="#dceafc"/>
<rect x="201.6" y="351.5" width="164.1" height="23.2" fill="#cbcbcb"/>
<text x="227.09" y="368.8" font-size="16.9" fill="#111" stroke="#111" stroke-width="0.15" textLength="106.67" lengthAdjust="spacingAndGlyphs">1: DCSFQ cell</text>
<rect x="216.87" y="259.6" width="19.73" height="19.73" fill="#f2f0dc"/>
<path d="M216.87 259.6H236.6M216.87 262.06H236.6M216.87 264.53H236.6M216.87 266.99H236.6M216.87 269.46H236.6M216.87 271.93H236.6M216.87 274.39H236.6M216.87 276.86H236.6M216.87 279.33H236.6M216.87 259.6V279.33M221.8 262.06V279.33M226.74 259.6V279.33M231.67 259.6V279.33M236.6 259.6V279.33" stroke="#a45a5a" stroke-width="0.75" fill="none"/>
<rect x="216.87" y="259.6" width="19.73" height="19.73" fill="#b07070" opacity="0.25"/>
<rect x="239.07" y="259.6" width="19.73" height="19.73" fill="#f2f0dc"/>
<path d="M239.07 259.6H258.8M239.07 262.06H258.8M239.07 264.53H258.8M239.07 266.99H258.8M239.07 269.46H258.8M239.07 271.93H258.8M239.07 274.39H258.8M239.07 276.86H258.8M239.07 279.33H258.8M239.07 259.6V279.33M244 262.06V279.33M248.93 259.6V279.33M253.87 259.6V279.33M258.8 259.6V279.33" stroke="#a45a5a" stroke-width="0.75" fill="none"/>
<rect x="239.07" y="259.6" width="19.73" height="19.73" fill="#b07070" opacity="0.25"/>
<rect x="263.73" y="259.6" width="19.73" height="19.73" fill="#f2f0dc"/>
<path d="M263.73 259.6H283.46M263.73 262.06H283.46M263.73 264.53H283.46M263.73 266.99H283.46M263.73 269.46H283.46M263.73 271.93H283.46M263.73 274.39H283.46M263.73 276.86H283.46M263.73 279.33H283.46M263.73 259.6V279.33M268.66 262.06V279.33M273.6 259.6V279.33M278.53 259.6V279.33M283.46 259.6V279.33" stroke="#a45a5a" stroke-width="0.75" fill="none"/>
<rect x="263.73" y="259.6" width="19.73" height="19.73" fill="#b07070" opacity="0.25"/>
<path d="M216.87 308.92L315.52 308.92" stroke="#58b47c" stroke-width="1.0" fill="none"/>
<path d="M236.6 308.92L236.6 313.85" stroke="#58b47c" stroke-width="1.0" fill="none"/>
<path d="M236.6 323.72L236.6 326.19" stroke="#58b47c" stroke-width="1.0" fill="none"/>
<path d="M251.4 308.92L251.4 321.25" stroke="#58b47c" stroke-width="1.0" fill="none"/>
<path d="M261.26 308.92L261.26 321.25" stroke="#58b47c" stroke-width="1.0" fill="none"/>
<path d="M266.2 308.92L266.2 303.99" stroke="#58b47c" stroke-width="1.0" fill="none"/>
<path d="M266.2 294.12L266.2 291.66" stroke="#58b47c" stroke-width="1.0" fill="none"/>
<path d="M295.79 308.92L295.79 303.99" stroke="#58b47c" stroke-width="1.0" fill="none"/>
<path d="M295.79 294.12L295.79 291.66" stroke="#58b47c" stroke-width="1.0" fill="none"/>
<path d="M280.99 308.92L280.99 313.85" stroke="#58b47c" stroke-width="1.0" fill="none"/>
<path d="M280.99 313.85L271.13 313.85" stroke="#58b47c" stroke-width="1.0" fill="none"/>
<path d="M280.99 323.72L271.13 323.72" stroke="#58b47c" stroke-width="1.0" fill="none"/>
<path d="M280.99 323.72L280.99 326.19" stroke="#58b47c" stroke-width="1.0" fill="none"/>
<path d="M295.79 308.92L295.79 313.85" stroke="#58b47c" stroke-width="1.0" fill="none"/>
<path d="M295.79 313.85L305.66 313.85" stroke="#58b47c" stroke-width="1.0" fill="none"/>
<path d="M295.79 323.72L305.66 323.72" stroke="#58b47c" stroke-width="1.0" fill="none"/>
<path d="M295.79 323.72L295.79 326.19" stroke="#58b47c" stroke-width="1.0" fill="none"/>
<path d="M224.27 308.92H234.14" stroke="#dceafc" stroke-width="1.6"/>
<path d="M224.27 308.92 L225.5 307.92 L226.74 308.92 L227.97 307.92 L229.2 308.92 L230.44 307.92 L231.67 308.92 L232.9 307.92 L234.14 308.92" stroke="#a45a5a" stroke-width="0.8" fill="none"/>
<path d="M239.07 308.92H248.93" stroke="#dceafc" stroke-width="1.6"/>
<path d="M239.07 308.92 L240.3 307.92 L241.53 308.92 L242.77 307.92 L244 308.92 L245.23 307.92 L246.47 308.92 L247.7 307.92 L248.93 308.92" stroke="#a45a5a" stroke-width="0.8" fill="none"/>
<path d="M268.66 308.92H278.53" stroke="#dceafc" stroke-width="1.6"/>
<path d="M268.66 308.92 L269.9 307.92 L271.13 308.92 L272.36 307.92 L273.6 308.92 L274.83 307.92 L276.06 308.92 L277.3 307.92 L278.53 308.92" stroke="#a45a5a" stroke-width="0.8" fill="none"/>
<path d="M283.46 308.92H293.33" stroke="#dceafc" stroke-width="1.6"/>
<path d="M283.46 308.92 L284.69 307.92 L285.93 308.92 L287.16 307.92 L288.39 308.92 L289.63 307.92 L290.86 308.92 L292.09 307.92 L293.33 308.92" stroke="#a45a5a" stroke-width="0.8" fill="none"/>
<path d="M298.26 308.92H308.12" stroke="#dceafc" stroke-width="1.6"/>
<path d="M298.26 308.92 L299.49 307.92 L300.72 308.92 L301.96 307.92 L303.19 308.92 L304.42 307.92 L305.66 308.92 L306.89 307.92 L308.12 308.92" stroke="#a45a5a" stroke-width="0.8" fill="none"/>
<path d="M251.4 321.25H261.26" stroke="#dceafc" stroke-width="1.6"/>
<path d="M251.4 321.25 L252.63 320.25 L253.87 321.25 L255.1 320.25 L256.33 321.25 L257.57 320.25 L258.8 321.25 L260.03 320.25 L261.26 321.25" stroke="#a45a5a" stroke-width="0.8" fill="none"/>
<path d="M236.6 313.85V323.72" stroke="#dceafc" stroke-width="1.6"/>
<path d="M236.6 313.85 L235.6 315.09 L236.6 316.32 L235.6 317.55 L236.6 318.79 L235.6 320.02 L236.6 321.25 L235.6 322.49 L236.6 323.72" stroke="#a45a5a" stroke-width="0.8" fill="none"/>
<path d="M280.99 326.19V336.05" stroke="#dceafc" stroke-width="1.6"/>
<path d="M280.99 326.19 L279.99 327.42 L280.99 328.65 L279.99 329.88 L280.99 331.12 L279.99 332.35 L280.99 333.58 L279.99 334.82 L280.99 336.05" stroke="#a45a5a" stroke-width="0.8" fill="none"/>
<path d="M295.79 326.19V336.05" stroke="#dceafc" stroke-width="1.6"/>
<path d="M295.79 326.19 L294.79 327.42 L295.79 328.65 L294.79 329.88 L295.79 331.12 L294.79 332.35 L295.79 333.58 L294.79 334.82 L295.79 336.05" stroke="#a45a5a" stroke-width="0.8" fill="none"/>
<path d="M271.13 313.85V323.72" stroke="#dceafc" stroke-width="1.6"/>
<path d="M271.13 313.85 L270.13 315.09 L271.13 316.32 L270.13 317.55 L271.13 318.79 L270.13 320.02 L271.13 321.25 L270.13 322.49 L271.13 323.72" stroke="#a45a5a" stroke-width="0.8" fill="none"/>
<path d="M305.66 313.85V323.72" stroke="#dceafc" stroke-width="1.6"/>
<path d="M305.66 313.85 L304.66 315.09 L305.66 316.32 L304.66 317.55 L305.66 318.79 L304.66 320.02 L305.66 321.25 L304.66 322.49 L305.66 323.72" stroke="#a45a5a" stroke-width="0.8" fill="none"/>
<path d="M251.4 308.92H261.26" stroke="#a45a5a" stroke-width="0.8"/>
<path d="M253.87 306.45L258.8 311.39M253.87 311.39L258.8 306.45" stroke="#a45a5a" stroke-width="0.8"/>
<path d="M280.99 313.85V323.72" stroke="#a45a5a" stroke-width="0.8"/>
<path d="M278.53 316.32L283.46 321.25M278.53 321.25L283.46 316.32" stroke="#a45a5a" stroke-width="0.8"/>
<path d="M295.79 313.85V323.72" stroke="#a45a5a" stroke-width="0.8"/>
<path d="M293.33 316.32L298.26 321.25M293.33 321.25L298.26 316.32" stroke="#a45a5a" stroke-width="0.8"/>
<path d="M236.6 326.19L236.6 328.65" stroke="#a45a5a" stroke-width="0.8" fill="none"/>
<path d="M234.63 328.65L238.57 328.65" stroke="#a45a5a" stroke-width="0.9" fill="none"/>
<path d="M280.99 336.05L280.99 338.52" stroke="#a45a5a" stroke-width="0.8" fill="none"/>
<path d="M279.02 338.52L282.97 338.52" stroke="#a45a5a" stroke-width="0.9" fill="none"/>
<path d="M295.79 336.05L295.79 338.52" stroke="#a45a5a" stroke-width="0.8" fill="none"/>
<path d="M293.82 338.52L297.77 338.52" stroke="#a45a5a" stroke-width="0.9" fill="none"/>
<path d="M266.2 291.66L266.2 289.19" stroke="#a45a5a" stroke-width="0.8" fill="none"/>
<path d="M264.22 289.19L268.17 289.19" stroke="#a45a5a" stroke-width="0.9" fill="none"/>
<path d="M295.79 291.66L295.79 289.19" stroke="#a45a5a" stroke-width="0.8" fill="none"/>
<path d="M293.82 289.19L297.77 289.19" stroke="#a45a5a" stroke-width="0.9" fill="none"/>
<path d="M266.2 294.12L266.2 303.99" stroke="#a45a5a" stroke-width="0.8" fill="none"/>
<circle cx="266.2" cy="299.06" r="2.47" fill="#ecdcd8" stroke="#a45a5a" stroke-width="0.8"/>
<path d="M265.9 297.66L267.2 299.06L265.9 300.46" stroke="#a45a5a" stroke-width="0.6" fill="none"/>
<path d="M295.79 294.12L295.79 303.99" stroke="#a45a5a" stroke-width="0.8" fill="none"/>
<circle cx="295.79" cy="299.06" r="2.47" fill="#ecdcd8" stroke="#a45a5a" stroke-width="0.8"/>
<path d="M295.49 297.66L296.79 299.06L295.49 300.46" stroke="#a45a5a" stroke-width="0.6" fill="none"/>
<rect x="201" y="1325.6" width="39.8" height="34.6" fill="url(#btn)" stroke="#b8b8b8" stroke-width="1"/>
<rect x="242.8" y="1325.6" width="39.8" height="34.6" fill="url(#btn)" stroke="#b8b8b8" stroke-width="1"/>
<rect x="284.6" y="1325.6" width="39.8" height="34.6" fill="url(#btn)" stroke="#b8b8b8" stroke-width="1"/>
<rect x="326.2" y="1325.6" width="39.8" height="34.6" fill="url(#btn)" stroke="#b8b8b8" stroke-width="1"/>
<path d="M218.8 1332.8H223.4V1340.8H231.4V1345.4H223.4V1353.4H218.8V1345.4H210.8V1340.8H218.8Z" fill="#62c42a" stroke="#3e9a1c" stroke-width="0.9" stroke-linejoin="round"/>
<rect x="252.6" y="1340.2" width="20.8" height="6" rx="1.4" fill="#f0202e" stroke="#c01422" stroke-width="0.9"/>
<path d="M291.4 1351L304.2 1339L317 1351" fill="none" stroke="#a2a2a2" stroke-width="4.4" stroke-linecap="round" stroke-linejoin="miter"/>
<path d="M333 1337.8L345.7 1350.2L358.4 1337.8" fill="none" stroke="#a2a2a2" stroke-width="4.4" stroke-linecap="round" stroke-linejoin="miter"/>
<rect x="367.6" y="213.8" width="1529.4" height="1147.2" fill="#fafafa"/>
<rect x="367.6" y="213.8" width="1509" height="1126.5" fill="#fff"/>
<path d="M390.4 213.8V1340.2M422.1 213.8V1340.2M453.8 213.8V1340.2M485.5 213.8V1340.2M517.2 213.8V1340.2M548.9 213.8V1340.2M580.6 213.8V1340.2M612.3 213.8V1340.2M644 213.8V1340.2M675.7 213.8V1340.2M707.4 213.8V1340.2M739.1 213.8V1340.2M770.8 213.8V1340.2M802.5 213.8V1340.2M834.2 213.8V1340.2M865.9 213.8V1340.2M897.6 213.8V1340.2M929.3 213.8V1340.2M961 213.8V1340.2M992.7 213.8V1340.2M1024.4 213.8V1340.2M1056.1 213.8V1340.2M1087.8 213.8V1340.2M1119.5 213.8V1340.2M1151.2 213.8V1340.2M1182.9 213.8V1340.2M1214.6 213.8V1340.2M1246.3 213.8V1340.2M1278 213.8V1340.2M1309.7 213.8V1340.2M1341.4 213.8V1340.2M1373.1 213.8V1340.2M1404.8 213.8V1340.2M1436.5 213.8V1340.2M1468.2 213.8V1340.2M1499.9 213.8V1340.2M1531.6 213.8V1340.2M1563.3 213.8V1340.2M1595 213.8V1340.2M1626.7 213.8V1340.2M1658.4 213.8V1340.2M1690.1 213.8V1340.2M1721.8 213.8V1340.2M1753.5 213.8V1340.2M1785.2 213.8V1340.2M1816.9 213.8V1340.2M1848.6 213.8V1340.2M367.6 237.4H1876.6M367.6 269.1H1876.6M367.6 300.8H1876.6M367.6 332.5H1876.6M367.6 364.2H1876.6M367.6 395.9H1876.6M367.6 427.6H1876.6M367.6 459.3H1876.6M367.6 491H1876.6M367.6 522.7H1876.6M367.6 554.4H1876.6M367.6 586.1H1876.6M367.6 617.8H1876.6M367.6 649.5H1876.6M367.6 681.2H1876.6M367.6 712.9H1876.6M367.6 744.6H1876.6M367.6 776.3H1876.6M367.6 808H1876.6M367.6 839.7H1876.6M367.6 871.4H1876.6M367.6 903.1H1876.6M367.6 934.8H1876.6M367.6 966.5H1876.6M367.6 998.2H1876.6M367.6 1029.9H1876.6M367.6 1061.6H1876.6M367.6 1093.3H1876.6M367.6 1125H1876.6M367.6 1156.7H1876.6M367.6 1188.4H1876.6M367.6 1220.1H1876.6M367.6 1251.8H1876.6M367.6 1283.5H1876.6M367.6 1315.2H1876.6" stroke="#808080" stroke-opacity="0.34" stroke-width="1" fill="none"/>
<rect x="1876.2" y="214" width="0.9" height="1126.3" fill="#e9e9e9"/>
<rect x="367.6" y="1340" width="1509" height="0.9" fill="#e9e9e9"/>
<g clip-path="url(#canvas)">
<rect x="485.5" y="269.1" width="253.6" height="253.6" fill="#ffffdc"/>
<path d="M485.5 269.1H739.1M485.5 300.8H739.1M485.5 332.5H739.1M485.5 364.2H739.1M485.5 395.9H739.1M485.5 427.6H739.1M485.5 459.3H739.1M485.5 491H739.1M485.5 522.7H739.1M485.5 269.1V522.7M612.3 269.1V522.7M675.7 269.1V522.7M739.1 269.1V522.7M548.9 300.8V522.7" fill="none" stroke="#720303" stroke-width="2.7" stroke-linecap="round"/>
<path d="M614.3 294.6H623.5M618.9 290V299.2" stroke="#a8a898" stroke-width="0.8" opacity="0.5" fill="none"/>
<path d="M677.7 294.6H686.9M682.3 290V299.2" stroke="#a8a898" stroke-width="0.8" opacity="0.5" fill="none"/>
<path d="M487.5 326.3H496.7M492.1 321.7V330.9" stroke="#a8a898" stroke-width="0.8" opacity="0.5" fill="none"/>
<path d="M550.9 326.3H560.1M555.5 321.7V330.9" stroke="#a8a898" stroke-width="0.8" opacity="0.5" fill="none"/>
<path d="M614.3 326.3H623.5M618.9 321.7V330.9" stroke="#a8a898" stroke-width="0.8" opacity="0.5" fill="none"/>
<path d="M677.7 326.3H686.9M682.3 321.7V330.9" stroke="#a8a898" stroke-width="0.8" opacity="0.5" fill="none"/>
<path d="M487.5 358H496.7M492.1 353.4V362.6" stroke="#a8a898" stroke-width="0.8" opacity="0.5" fill="none"/>
<path d="M550.9 358H560.1M555.5 353.4V362.6" stroke="#a8a898" stroke-width="0.8" opacity="0.5" fill="none"/>
<path d="M614.3 358H623.5M618.9 353.4V362.6" stroke="#a8a898" stroke-width="0.8" opacity="0.5" fill="none"/>
<path d="M677.7 358H686.9M682.3 353.4V362.6" stroke="#a8a898" stroke-width="0.8" opacity="0.5" fill="none"/>
<path d="M487.5 389.7H496.7M492.1 385.1V394.3" stroke="#a8a898" stroke-width="0.8" opacity="0.5" fill="none"/>
<path d="M550.9 389.7H560.1M555.5 385.1V394.3" stroke="#a8a898" stroke-width="0.8" opacity="0.5" fill="none"/>
<path d="M614.3 389.7H623.5M618.9 385.1V394.3" stroke="#a8a898" stroke-width="0.8" opacity="0.5" fill="none"/>
<path d="M677.7 389.7H686.9M682.3 385.1V394.3" stroke="#a8a898" stroke-width="0.8" opacity="0.5" fill="none"/>
<path d="M487.5 421.4H496.7M492.1 416.8V426" stroke="#a8a898" stroke-width="0.8" opacity="0.5" fill="none"/>
<path d="M550.9 421.4H560.1M555.5 416.8V426" stroke="#a8a898" stroke-width="0.8" opacity="0.5" fill="none"/>
<path d="M614.3 421.4H623.5M618.9 416.8V426" stroke="#a8a898" stroke-width="0.8" opacity="0.5" fill="none"/>
<path d="M677.7 421.4H686.9M682.3 416.8V426" stroke="#a8a898" stroke-width="0.8" opacity="0.5" fill="none"/>
<path d="M487.5 453.1H496.7M492.1 448.5V457.7" stroke="#a8a898" stroke-width="0.8" opacity="0.5" fill="none"/>
<path d="M550.9 453.1H560.1M555.5 448.5V457.7" stroke="#a8a898" stroke-width="0.8" opacity="0.5" fill="none"/>
<path d="M614.3 453.1H623.5M618.9 448.5V457.7" stroke="#a8a898" stroke-width="0.8" opacity="0.5" fill="none"/>
<path d="M677.7 453.1H686.9M682.3 448.5V457.7" stroke="#a8a898" stroke-width="0.8" opacity="0.5" fill="none"/>
<path d="M487.5 484.8H496.7M492.1 480.2V489.4" stroke="#a8a898" stroke-width="0.8" opacity="0.5" fill="none"/>
<path d="M550.9 484.8H560.1M555.5 480.2V489.4" stroke="#a8a898" stroke-width="0.8" opacity="0.5" fill="none"/>
<path d="M614.3 484.8H623.5M618.9 480.2V489.4" stroke="#a8a898" stroke-width="0.8" opacity="0.5" fill="none"/>
<path d="M677.7 484.8H686.9M682.3 480.2V489.4" stroke="#a8a898" stroke-width="0.8" opacity="0.5" fill="none"/>
<path d="M487.5 516.5H496.7M492.1 511.9V521.1" stroke="#a8a898" stroke-width="0.8" opacity="0.5" fill="none"/>
<path d="M550.9 516.5H560.1M555.5 511.9V521.1" stroke="#a8a898" stroke-width="0.8" opacity="0.5" fill="none"/>
<path d="M614.3 516.5H623.5M618.9 511.9V521.1" stroke="#a8a898" stroke-width="0.8" opacity="0.5" fill="none"/>
<path d="M677.7 516.5H686.9M682.3 511.9V521.1" stroke="#a8a898" stroke-width="0.8" opacity="0.5" fill="none"/>
<path d="M506.31 302.8H517.31M511.81 297.3V308.3" stroke="#b8a0a0" stroke-width="0.8" opacity="0.6" fill="none"/>
<text x="511.49" y="293.8" font-size="23.8" fill="#720303" stroke="#720303" stroke-width="0.3" textLength="80.28" lengthAdjust="spacingAndGlyphs">MODEL</text>
<text x="491.68" y="322" font-size="14.1" fill="#720303" stroke="#720303" stroke-width="0.22" textLength="39.36" lengthAdjust="spacingAndGlyphs">RTYPE</text>
<text x="491.68" y="353.7" font-size="14.1" fill="#720303" stroke="#720303" stroke-width="0.22" textLength="18.56" lengthAdjust="spacingAndGlyphs">VG</text>
<text x="491.68" y="385.4" font-size="14.1" fill="#720303" stroke="#720303" stroke-width="0.22" textLength="34.66" lengthAdjust="spacingAndGlyphs">ICRIT</text>
<text x="491.68" y="417.1" font-size="14.1" fill="#720303" stroke="#720303" stroke-width="0.22" textLength="17.56" lengthAdjust="spacingAndGlyphs">RN</text>
<text x="491.68" y="448.8" font-size="14.1" fill="#720303" stroke="#720303" stroke-width="0.22" textLength="16.26" lengthAdjust="spacingAndGlyphs">R0</text>
<text x="491.68" y="480.5" font-size="14.1" fill="#720303" stroke="#720303" stroke-width="0.22" textLength="25.56" lengthAdjust="spacingAndGlyphs">CAP</text>
<text x="491.68" y="512.2" font-size="14.1" fill="#720303" stroke="#720303" stroke-width="0.22" textLength="24.66" lengthAdjust="spacingAndGlyphs">CCT</text>
<text x="618.48" y="290.3" font-size="14.1" fill="#720303" stroke="#720303" stroke-width="0.22" textLength="8.66" lengthAdjust="spacingAndGlyphs">T</text>
<text x="618.48" y="322" font-size="14.1" fill="#720303" stroke="#720303" stroke-width="0.22" textLength="16.36" lengthAdjust="spacingAndGlyphs">TC</text>
<text x="618.48" y="353.7" font-size="14.1" fill="#720303" stroke="#720303" stroke-width="0.22" textLength="32.36" lengthAdjust="spacingAndGlyphs">DELV</text>
<text x="618.48" y="385.4" font-size="14.1" fill="#720303" stroke="#720303" stroke-width="0.22" textLength="9.56" lengthAdjust="spacingAndGlyphs">D</text>
<text x="618.48" y="417.1" font-size="14.1" fill="#720303" stroke="#720303" stroke-width="0.22" textLength="36.56" lengthAdjust="spacingAndGlyphs">ICFCT</text>
<text x="618.48" y="448.8" font-size="14.1" fill="#720303" stroke="#720303" stroke-width="0.22" textLength="22.56" lengthAdjust="spacingAndGlyphs">PHI</text>
<text x="618.48" y="480.5" font-size="14.1" fill="#720303" stroke="#720303" stroke-width="0.22" textLength="25.36" lengthAdjust="spacingAndGlyphs">CPR</text>
<text x="618.48" y="512.2" font-size="14.1" fill="#720303" stroke="#720303" stroke-width="0.22" textLength="33.56" lengthAdjust="spacingAndGlyphs">ICON</text>
<text x="554.88" y="322" font-size="14.1" fill="#3a424e" stroke="#3a424e" stroke-width="0.22" textLength="8.56" lengthAdjust="spacingAndGlyphs">0</text>
<text x="554.88" y="385.4" font-size="14.1" fill="#3a424e" stroke="#3a424e" stroke-width="0.22" textLength="41.66" lengthAdjust="spacingAndGlyphs">200µA</text>
<text x="554.88" y="417.1" font-size="14.1" fill="#3a424e" stroke="#3a424e" stroke-width="0.22" textLength="27.06" lengthAdjust="spacingAndGlyphs">90Ω</text>
<text x="554.88" y="480.5" font-size="14.1" fill="#3a424e" stroke="#3a424e" stroke-width="0.22" textLength="23.56" lengthAdjust="spacingAndGlyphs">1pF</text>
<path d="M583.1 246.4V263C583.1 265.8 581.1 266.7 578.4 265.9M589.5 246.4V263C589.5 265.8 587.5 266.7 584.8 265.9" fill="none" stroke="#101010" stroke-width="2.15" stroke-linecap="butt"/>
<text x="592.99" y="262.8" font-size="23.8" fill="#101010" stroke="#101010" stroke-width="0.3" textLength="39.48" lengthAdjust="spacingAndGlyphs">200</text>
<path d="M606.8 267.6H617.8M612.3 262.1V273.1" stroke="#9a9a9a" stroke-width="0.8" opacity="0.55" fill="none"/>
<rect x="770.8" y="269.1" width="253.6" height="253.6" fill="#ffffdc"/>
<path d="M770.8 269.1H1024.4M770.8 300.8H1024.4M770.8 332.5H1024.4M770.8 364.2H1024.4M770.8 395.9H1024.4M770.8 427.6H1024.4M770.8 459.3H1024.4M770.8 491H1024.4M770.8 522.7H1024.4M770.8 269.1V522.7M897.6 269.1V522.7M961 269.1V522.7M1024.4 269.1V522.7M834.2 300.8V522.7" fill="none" stroke="#720303" stroke-width="2.7" stroke-linecap="round"/>
<path d="M899.6 294.6H908.8M904.2 290V299.2" stroke="#a8a898" stroke-width="0.8" opacity="0.5" fill="none"/>
<path d="M963 294.6H972.2M967.6 290V299.2" stroke="#a8a898" stroke-width="0.8" opacity="0.5" fill="none"/>
<path d="M772.8 326.3H782M777.4 321.7V330.9" stroke="#a8a898" stroke-width="0.8" opacity="0.5" fill="none"/>
<path d="M836.2 326.3H845.4M840.8 321.7V330.9" stroke="#a8a898" stroke-width="0.8" opacity="0.5" fill="none"/>
<path d="M899.6 326.3H908.8M904.2 321.7V330.9" stroke="#a8a898" stroke-width="0.8" opacity="0.5" fill="none"/>
<path d="M963 326.3H972.2M967.6 321.7V330.9" stroke="#a8a898" stroke-width="0.8" opacity="0.5" fill="none"/>
<path d="M772.8 358H782M777.4 353.4V362.6" stroke="#a8a898" stroke-width="0.8" opacity="0.5" fill="none"/>
<path d="M836.2 358H845.4M840.8 353.4V362.6" stroke="#a8a898" stroke-width="0.8" opacity="0.5" fill="none"/>
<path d="M899.6 358H908.8M904.2 353.4V362.6" stroke="#a8a898" stroke-width="0.8" opacity="0.5" fill="none"/>
<path d="M963 358H972.2M967.6 353.4V362.6" stroke="#a8a898" stroke-width="0.8" opacity="0.5" fill="none"/>
<path d="M772.8 389.7H782M777.4 385.1V394.3" stroke="#a8a898" stroke-width="0.8" opacity="0.5" fill="none"/>
<path d="M836.2 389.7H845.4M840.8 385.1V394.3" stroke="#a8a898" stroke-width="0.8" opacity="0.5" fill="none"/>
<path d="M899.6 389.7H908.8M904.2 385.1V394.3" stroke="#a8a898" stroke-width="0.8" opacity="0.5" fill="none"/>
<path d="M963 389.7H972.2M967.6 385.1V394.3" stroke="#a8a898" stroke-width="0.8" opacity="0.5" fill="none"/>
<path d="M772.8 421.4H782M777.4 416.8V426" stroke="#a8a898" stroke-width="0.8" opacity="0.5" fill="none"/>
<path d="M836.2 421.4H845.4M840.8 416.8V426" stroke="#a8a898" stroke-width="0.8" opacity="0.5" fill="none"/>
<path d="M899.6 421.4H908.8M904.2 416.8V426" stroke="#a8a898" stroke-width="0.8" opacity="0.5" fill="none"/>
<path d="M963 421.4H972.2M967.6 416.8V426" stroke="#a8a898" stroke-width="0.8" opacity="0.5" fill="none"/>
<path d="M772.8 453.1H782M777.4 448.5V457.7" stroke="#a8a898" stroke-width="0.8" opacity="0.5" fill="none"/>
<path d="M836.2 453.1H845.4M840.8 448.5V457.7" stroke="#a8a898" stroke-width="0.8" opacity="0.5" fill="none"/>
<path d="M899.6 453.1H908.8M904.2 448.5V457.7" stroke="#a8a898" stroke-width="0.8" opacity="0.5" fill="none"/>
<path d="M963 453.1H972.2M967.6 448.5V457.7" stroke="#a8a898" stroke-width="0.8" opacity="0.5" fill="none"/>
<path d="M772.8 484.8H782M777.4 480.2V489.4" stroke="#a8a898" stroke-width="0.8" opacity="0.5" fill="none"/>
<path d="M836.2 484.8H845.4M840.8 480.2V489.4" stroke="#a8a898" stroke-width="0.8" opacity="0.5" fill="none"/>
<path d="M899.6 484.8H908.8M904.2 480.2V489.4" stroke="#a8a898" stroke-width="0.8" opacity="0.5" fill="none"/>
<path d="M963 484.8H972.2M967.6 480.2V489.4" stroke="#a8a898" stroke-width="0.8" opacity="0.5" fill="none"/>
<path d="M772.8 516.5H782M777.4 511.9V521.1" stroke="#a8a898" stroke-width="0.8" opacity="0.5" fill="none"/>
<path d="M836.2 516.5H845.4M840.8 511.9V521.1" stroke="#a8a898" stroke-width="0.8" opacity="0.5" fill="none"/>
<path d="M899.6 516.5H908.8M904.2 511.9V521.1" stroke="#a8a898" stroke-width="0.8" opacity="0.5" fill="none"/>
<path d="M963 516.5H972.2M967.6 511.9V521.1" stroke="#a8a898" stroke-width="0.8" opacity="0.5" fill="none"/>
<path d="M791.61 302.8H802.61M797.11 297.3V308.3" stroke="#b8a0a0" stroke-width="0.8" opacity="0.6" fill="none"/>
<text x="796.79" y="293.8" font-size="23.8" fill="#720303" stroke="#720303" stroke-width="0.3" textLength="80.28" lengthAdjust="spacingAndGlyphs">MODEL</text>
<text x="776.98" y="322" font-size="14.1" fill="#720303" stroke="#720303" stroke-width="0.22" textLength="39.36" lengthAdjust="spacingAndGlyphs">RTYPE</text>
<text x="776.98" y="353.7" font-size="14.1" fill="#720303" stroke="#720303" stroke-width="0.22" textLength="18.56" lengthAdjust="spacingAndGlyphs">VG</text>
<text x="776.98" y="385.4" font-size="14.1" fill="#720303" stroke="#720303" stroke-width="0.22" textLength="34.66" lengthAdjust="spacingAndGlyphs">ICRIT</text>
<text x="776.98" y="417.1" font-size="14.1" fill="#720303" stroke="#720303" stroke-width="0.22" textLength="17.56" lengthAdjust="spacingAndGlyphs">RN</text>
<text x="776.98" y="448.8" font-size="14.1" fill="#720303" stroke="#720303" stroke-width="0.22" textLength="16.26" lengthAdjust="spacingAndGlyphs">R0</text>
<text x="776.98" y="480.5" font-size="14.1" fill="#720303" stroke="#720303" stroke-width="0.22" textLength="25.56" lengthAdjust="spacingAndGlyphs">CAP</text>
<text x="776.98" y="512.2" font-size="14.1" fill="#720303" stroke="#720303" stroke-width="0.22" textLength="24.66" lengthAdjust="spacingAndGlyphs">CCT</text>
<text x="903.78" y="290.3" font-size="14.1" fill="#720303" stroke="#720303" stroke-width="0.22" textLength="8.66" lengthAdjust="spacingAndGlyphs">T</text>
<text x="903.78" y="322" font-size="14.1" fill="#720303" stroke="#720303" stroke-width="0.22" textLength="16.36" lengthAdjust="spacingAndGlyphs">TC</text>
<text x="903.78" y="353.7" font-size="14.1" fill="#720303" stroke="#720303" stroke-width="0.22" textLength="32.36" lengthAdjust="spacingAndGlyphs">DELV</text>
<text x="903.78" y="385.4" font-size="14.1" fill="#720303" stroke="#720303" stroke-width="0.22" textLength="9.56" lengthAdjust="spacingAndGlyphs">D</text>
<text x="903.78" y="417.1" font-size="14.1" fill="#720303" stroke="#720303" stroke-width="0.22" textLength="36.56" lengthAdjust="spacingAndGlyphs">ICFCT</text>
<text x="903.78" y="448.8" font-size="14.1" fill="#720303" stroke="#720303" stroke-width="0.22" textLength="22.56" lengthAdjust="spacingAndGlyphs">PHI</text>
<text x="903.78" y="480.5" font-size="14.1" fill="#720303" stroke="#720303" stroke-width="0.22" textLength="25.36" lengthAdjust="spacingAndGlyphs">CPR</text>
<text x="903.78" y="512.2" font-size="14.1" fill="#720303" stroke="#720303" stroke-width="0.22" textLength="33.56" lengthAdjust="spacingAndGlyphs">ICON</text>
<text x="840.18" y="322" font-size="14.1" fill="#3a424e" stroke="#3a424e" stroke-width="0.22" textLength="8.56" lengthAdjust="spacingAndGlyphs">0</text>
<text x="840.18" y="385.4" font-size="14.1" fill="#3a424e" stroke="#3a424e" stroke-width="0.22" textLength="41.66" lengthAdjust="spacingAndGlyphs">225µA</text>
<text x="840.18" y="417.1" font-size="14.1" fill="#3a424e" stroke="#3a424e" stroke-width="0.22" textLength="27.06" lengthAdjust="spacingAndGlyphs">90Ω</text>
<text x="840.18" y="480.5" font-size="14.1" fill="#3a424e" stroke="#3a424e" stroke-width="0.22" textLength="51.56" lengthAdjust="spacingAndGlyphs">1,125pF</text>
<path d="M868.4 246.4V263C868.4 265.8 866.4 266.7 863.7 265.9M874.8 246.4V263C874.8 265.8 872.8 266.7 870.1 265.9" fill="none" stroke="#101010" stroke-width="2.15" stroke-linecap="butt"/>
<text x="878.29" y="262.8" font-size="23.8" fill="#101010" stroke="#101010" stroke-width="0.3" textLength="39.48" lengthAdjust="spacingAndGlyphs">225</text>
<path d="M892.1 267.6H903.1M897.6 262.1V273.1" stroke="#9a9a9a" stroke-width="0.8" opacity="0.55" fill="none"/>
<rect x="1087.8" y="269.1" width="253.6" height="253.6" fill="#ffffdc"/>
<path d="M1087.8 269.1H1341.4M1087.8 300.8H1341.4M1087.8 332.5H1341.4M1087.8 364.2H1341.4M1087.8 395.9H1341.4M1087.8 427.6H1341.4M1087.8 459.3H1341.4M1087.8 491H1341.4M1087.8 522.7H1341.4M1087.8 269.1V522.7M1214.6 269.1V522.7M1278 269.1V522.7M1341.4 269.1V522.7M1151.2 300.8V522.7" fill="none" stroke="#720303" stroke-width="2.7" stroke-linecap="round"/>
<path d="M1216.6 294.6H1225.8M1221.2 290V299.2" stroke="#a8a898" stroke-width="0.8" opacity="0.5" fill="none"/>
<path d="M1280 294.6H1289.2M1284.6 290V299.2" stroke="#a8a898" stroke-width="0.8" opacity="0.5" fill="none"/>
<path d="M1089.8 326.3H1099M1094.4 321.7V330.9" stroke="#a8a898" stroke-width="0.8" opacity="0.5" fill="none"/>
<path d="M1153.2 326.3H1162.4M1157.8 321.7V330.9" stroke="#a8a898" stroke-width="0.8" opacity="0.5" fill="none"/>
<path d="M1216.6 326.3H1225.8M1221.2 321.7V330.9" stroke="#a8a898" stroke-width="0.8" opacity="0.5" fill="none"/>
<path d="M1280 326.3H1289.2M1284.6 321.7V330.9" stroke="#a8a898" stroke-width="0.8" opacity="0.5" fill="none"/>
<path d="M1089.8 358H1099M1094.4 353.4V362.6" stroke="#a8a898" stroke-width="0.8" opacity="0.5" fill="none"/>
<path d="M1153.2 358H1162.4M1157.8 353.4V362.6" stroke="#a8a898" stroke-width="0.8" opacity="0.5" fill="none"/>
<path d="M1216.6 358H1225.8M1221.2 353.4V362.6" stroke="#a8a898" stroke-width="0.8" opacity="0.5" fill="none"/>
<path d="M1280 358H1289.2M1284.6 353.4V362.6" stroke="#a8a898" stroke-width="0.8" opacity="0.5" fill="none"/>
<path d="M1089.8 389.7H1099M1094.4 385.1V394.3" stroke="#a8a898" stroke-width="0.8" opacity="0.5" fill="none"/>
<path d="M1153.2 389.7H1162.4M1157.8 385.1V394.3" stroke="#a8a898" stroke-width="0.8" opacity="0.5" fill="none"/>
<path d="M1216.6 389.7H1225.8M1221.2 385.1V394.3" stroke="#a8a898" stroke-width="0.8" opacity="0.5" fill="none"/>
<path d="M1280 389.7H1289.2M1284.6 385.1V394.3" stroke="#a8a898" stroke-width="0.8" opacity="0.5" fill="none"/>
<path d="M1089.8 421.4H1099M1094.4 416.8V426" stroke="#a8a898" stroke-width="0.8" opacity="0.5" fill="none"/>
<path d="M1153.2 421.4H1162.4M1157.8 416.8V426" stroke="#a8a898" stroke-width="0.8" opacity="0.5" fill="none"/>
<path d="M1216.6 421.4H1225.8M1221.2 416.8V426" stroke="#a8a898" stroke-width="0.8" opacity="0.5" fill="none"/>
<path d="M1280 421.4H1289.2M1284.6 416.8V426" stroke="#a8a898" stroke-width="0.8" opacity="0.5" fill="none"/>
<path d="M1089.8 453.1H1099M1094.4 448.5V457.7" stroke="#a8a898" stroke-width="0.8" opacity="0.5" fill="none"/>
<path d="M1153.2 453.1H1162.4M1157.8 448.5V457.7" stroke="#a8a898" stroke-width="0.8" opacity="0.5" fill="none"/>
<path d="M1216.6 453.1H1225.8M1221.2 448.5V457.7" stroke="#a8a898" stroke-width="0.8" opacity="0.5" fill="none"/>
<path d="M1280 453.1H1289.2M1284.6 448.5V457.7" stroke="#a8a898" stroke-width="0.8" opacity="0.5" fill="none"/>
<path d="M1089.8 484.8H1099M1094.4 480.2V489.4" stroke="#a8a898" stroke-width="0.8" opacity="0.5" fill="none"/>
<path d="M1153.2 484.8H1162.4M1157.8 480.2V489.4" stroke="#a8a898" stroke-width="0.8" opacity="0.5" fill="none"/>
<path d="M1216.6 484.8H1225.8M1221.2 480.2V489.4" stroke="#a8a898" stroke-width="0.8" opacity="0.5" fill="none"/>
<path d="M1280 484.8H1289.2M1284.6 480.2V489.4" stroke="#a8a898" stroke-width="0.8" opacity="0.5" fill="none"/>
<path d="M1089.8 516.5H1099M1094.4 511.9V521.1" stroke="#a8a898" stroke-width="0.8" opacity="0.5" fill="none"/>
<path d="M1153.2 516.5H1162.4M1157.8 511.9V521.1" stroke="#a8a898" stroke-width="0.8" opacity="0.5" fill="none"/>
<path d="M1216.6 516.5H1225.8M1221.2 511.9V521.1" stroke="#a8a898" stroke-width="0.8" opacity="0.5" fill="none"/>
<path d="M1280 516.5H1289.2M1284.6 511.9V521.1" stroke="#a8a898" stroke-width="0.8" opacity="0.5" fill="none"/>
<path d="M1108.61 302.8H1119.61M1114.11 297.3V308.3" stroke="#b8a0a0" stroke-width="0.8" opacity="0.6" fill="none"/>
<text x="1113.79" y="293.8" font-size="23.8" fill="#720303" stroke="#720303" stroke-width="0.3" textLength="80.28" lengthAdjust="spacingAndGlyphs">MODEL</text>
<text x="1093.98" y="322" font-size="14.1" fill="#720303" stroke="#720303" stroke-width="0.22" textLength="39.36" lengthAdjust="spacingAndGlyphs">RTYPE</text>
<text x="1093.98" y="353.7" font-size="14.1" fill="#720303" stroke="#720303" stroke-width="0.22" textLength="18.56" lengthAdjust="spacingAndGlyphs">VG</text>
<text x="1093.98" y="385.4" font-size="14.1" fill="#720303" stroke="#720303" stroke-width="0.22" textLength="34.66" lengthAdjust="spacingAndGlyphs">ICRIT</text>
<text x="1093.98" y="417.1" font-size="14.1" fill="#720303" stroke="#720303" stroke-width="0.22" textLength="17.56" lengthAdjust="spacingAndGlyphs">RN</text>
<text x="1093.98" y="448.8" font-size="14.1" fill="#720303" stroke="#720303" stroke-width="0.22" textLength="16.26" lengthAdjust="spacingAndGlyphs">R0</text>
<text x="1093.98" y="480.5" font-size="14.1" fill="#720303" stroke="#720303" stroke-width="0.22" textLength="25.56" lengthAdjust="spacingAndGlyphs">CAP</text>
<text x="1093.98" y="512.2" font-size="14.1" fill="#720303" stroke="#720303" stroke-width="0.22" textLength="24.66" lengthAdjust="spacingAndGlyphs">CCT</text>
<text x="1220.78" y="290.3" font-size="14.1" fill="#720303" stroke="#720303" stroke-width="0.22" textLength="8.66" lengthAdjust="spacingAndGlyphs">T</text>
<text x="1220.78" y="322" font-size="14.1" fill="#720303" stroke="#720303" stroke-width="0.22" textLength="16.36" lengthAdjust="spacingAndGlyphs">TC</text>
<text x="1220.78" y="353.7" font-size="14.1" fill="#720303" stroke="#720303" stroke-width="0.22" textLength="32.36" lengthAdjust="spacingAndGlyphs">DELV</text>
<text x="1220.78" y="385.4" font-size="14.1" fill="#720303" stroke="#720303" stroke-width="0.22" textLength="9.56" lengthAdjust="spacingAndGlyphs">D</text>
<text x="1220.78" y="417.1" font-size="14.1" fill="#720303" stroke="#720303" stroke-width="0.22" textLength="36.56" lengthAdjust="spacingAndGlyphs">ICFCT</text>
<text x="1220.78" y="448.8" font-size="14.1" fill="#720303" stroke="#720303" stroke-width="0.22" textLength="22.56" lengthAdjust="spacingAndGlyphs">PHI</text>
<text x="1220.78" y="480.5" font-size="14.1" fill="#720303" stroke="#720303" stroke-width="0.22" textLength="25.36" lengthAdjust="spacingAndGlyphs">CPR</text>
<text x="1220.78" y="512.2" font-size="14.1" fill="#720303" stroke="#720303" stroke-width="0.22" textLength="33.56" lengthAdjust="spacingAndGlyphs">ICON</text>
<text x="1157.18" y="322" font-size="14.1" fill="#3a424e" stroke="#3a424e" stroke-width="0.22" textLength="8.56" lengthAdjust="spacingAndGlyphs">0</text>
<text x="1157.18" y="385.4" font-size="14.1" fill="#3a424e" stroke="#3a424e" stroke-width="0.22" textLength="41.66" lengthAdjust="spacingAndGlyphs">250µA</text>
<text x="1157.18" y="417.1" font-size="14.1" fill="#3a424e" stroke="#3a424e" stroke-width="0.22" textLength="27.06" lengthAdjust="spacingAndGlyphs">90Ω</text>
<text x="1157.18" y="480.5" font-size="14.1" fill="#3a424e" stroke="#3a424e" stroke-width="0.22" textLength="43.56" lengthAdjust="spacingAndGlyphs">1,25pF</text>
<path d="M1185.4 246.4V263C1185.4 265.8 1183.4 266.7 1180.7 265.9M1191.8 246.4V263C1191.8 265.8 1189.8 266.7 1187.1 265.9" fill="none" stroke="#101010" stroke-width="2.15" stroke-linecap="butt"/>
<text x="1195.29" y="262.8" font-size="23.8" fill="#101010" stroke="#101010" stroke-width="0.3" textLength="39.48" lengthAdjust="spacingAndGlyphs">250</text>
<path d="M1209.1 267.6H1220.1M1214.6 262.1V273.1" stroke="#9a9a9a" stroke-width="0.8" opacity="0.55" fill="none"/>
<path d="M1151.2 491V681.2M1056.1 586.1H1246.3" stroke="#8a8a8a" stroke-width="0.9" fill="none" opacity="0.8"/>
<rect x="1135.35" y="570.25" width="31.7" height="31.7" fill="none" stroke="#8a8a8a" stroke-width="0.9" opacity="0.8"/>
<line x1="485.5" y1="903.1" x2="580.6" y2="903.1" stroke="#1b7b09" stroke-width="2.15" stroke-linecap="round"/>
<line x1="707.4" y1="903.1" x2="770.8" y2="903.1" stroke="#1b7b09" stroke-width="2.15" stroke-linecap="round"/>
<line x1="897.6" y1="903.1" x2="929.3" y2="903.1" stroke="#1b7b09" stroke-width="2.15" stroke-linecap="round"/>
<line x1="1056.1" y1="903.1" x2="1151.2" y2="903.1" stroke="#1b7b09" stroke-width="2.15" stroke-linecap="round"/>
<line x1="1278" y1="903.1" x2="1341.4" y2="903.1" stroke="#1b7b09" stroke-width="2.15" stroke-linecap="round"/>
<line x1="1468.2" y1="903.1" x2="1531.6" y2="903.1" stroke="#1b7b09" stroke-width="2.15" stroke-linecap="round"/>
<line x1="1658.4" y1="903.1" x2="1753.5" y2="903.1" stroke="#1b7b09" stroke-width="2.15" stroke-linecap="round"/>
<line x1="739.1" y1="903.1" x2="739.1" y2="966.5" stroke="#1b7b09" stroke-width="2.15" stroke-linecap="round"/>
<line x1="739.1" y1="1093.3" x2="739.1" y2="1125" stroke="#1b7b09" stroke-width="2.15" stroke-linecap="round"/>
<line x1="929.3" y1="903.1" x2="929.3" y2="1061.6" stroke="#1b7b09" stroke-width="2.15" stroke-linecap="round"/>
<line x1="1056.1" y1="903.1" x2="1056.1" y2="1061.6" stroke="#1b7b09" stroke-width="2.15" stroke-linecap="round"/>
<line x1="1119.5" y1="903.1" x2="1119.5" y2="839.7" stroke="#1b7b09" stroke-width="2.15" stroke-linecap="round"/>
<line x1="1119.5" y1="712.9" x2="1119.5" y2="681.2" stroke="#1b7b09" stroke-width="2.15" stroke-linecap="round"/>
<line x1="1499.9" y1="903.1" x2="1499.9" y2="839.7" stroke="#1b7b09" stroke-width="2.15" stroke-linecap="round"/>
<line x1="1499.9" y1="712.9" x2="1499.9" y2="681.2" stroke="#1b7b09" stroke-width="2.15" stroke-linecap="round"/>
<line x1="1309.7" y1="903.1" x2="1309.7" y2="966.5" stroke="#1b7b09" stroke-width="2.15" stroke-linecap="round"/>
<line x1="1309.7" y1="966.5" x2="1182.9" y2="966.5" stroke="#1b7b09" stroke-width="2.15" stroke-linecap="round"/>
<line x1="1309.7" y1="1093.3" x2="1182.9" y2="1093.3" stroke="#1b7b09" stroke-width="2.15" stroke-linecap="round"/>
<line x1="1309.7" y1="1093.3" x2="1309.7" y2="1125" stroke="#1b7b09" stroke-width="2.15" stroke-linecap="round"/>
<line x1="1499.9" y1="903.1" x2="1499.9" y2="966.5" stroke="#1b7b09" stroke-width="2.15" stroke-linecap="round"/>
<line x1="1499.9" y1="966.5" x2="1626.7" y2="966.5" stroke="#1b7b09" stroke-width="2.15" stroke-linecap="round"/>
<line x1="1499.9" y1="1093.3" x2="1626.7" y2="1093.3" stroke="#1b7b09" stroke-width="2.15" stroke-linecap="round"/>
<line x1="1499.9" y1="1093.3" x2="1499.9" y2="1125" stroke="#1b7b09" stroke-width="2.15" stroke-linecap="round"/>
<line x1="1309.7" y1="1251.8" x2="1309.7" y2="1251.8" stroke="#1b7b09" stroke-width="2.15" stroke-linecap="round"/>
<line x1="1499.9" y1="1251.8" x2="1499.9" y2="1251.8" stroke="#1b7b09" stroke-width="2.15" stroke-linecap="round"/>
<path d="M481 898.6L490 907.6M481 907.6L490 898.6" stroke="#1b7b09" stroke-width="0.8" fill="none"/>
<line x1="485.5" y1="903.1" x2="453.8" y2="871.4" stroke="#555" stroke-width="0.8" stroke-linecap="butt"/>
<path d="M448.3 871.4H459.3M453.8 865.9V876.9" stroke="#777" stroke-width="0.8" opacity="0.7" fill="none"/>
<path d="M1749 898.6L1758 907.6M1749 907.6L1758 898.6" stroke="#1b7b09" stroke-width="0.8" fill="none"/>
<line x1="1753.5" y1="903.1" x2="1785.2" y2="871.4" stroke="#555" stroke-width="0.8" stroke-linecap="butt"/>
<path d="M1779.7 871.4H1790.7M1785.2 865.9V876.9" stroke="#777" stroke-width="0.8" opacity="0.7" fill="none"/>
<text x="454.2" y="863.7" font-size="18.4" fill="#0f7a05" stroke="#0f7a05" stroke-width="0.2">1</text>
<text x="1786.2" y="863.7" font-size="18.4" fill="#0f7a05" stroke="#0f7a05" stroke-width="0.2">2</text>
<line x1="580.6" y1="903.1" x2="596.45" y2="903.1" stroke="#720303" stroke-width="2" stroke-linecap="butt"/>
<line x1="691.55" y1="903.1" x2="707.4" y2="903.1" stroke="#720303" stroke-width="2" stroke-linecap="butt"/>
<path d="M596.45 903.1 a11.89 12.3 0 0 1 23.77 0 a11.89 12.3 0 0 1 23.77 0 a11.89 12.3 0 0 1 23.77 0 a11.89 12.3 0 0 1 23.77 0" fill="none" stroke="#720303" stroke-width="3" stroke-linecap="round" stroke-linejoin="round"/>
<line x1="770.8" y1="903.1" x2="786.65" y2="903.1" stroke="#720303" stroke-width="2" stroke-linecap="butt"/>
<line x1="881.75" y1="903.1" x2="897.6" y2="903.1" stroke="#720303" stroke-width="2" stroke-linecap="butt"/>
<path d="M786.65 903.1 a11.89 12.3 0 0 1 23.77 0 a11.89 12.3 0 0 1 23.77 0 a11.89 12.3 0 0 1 23.77 0 a11.89 12.3 0 0 1 23.77 0" fill="none" stroke="#720303" stroke-width="3" stroke-linecap="round" stroke-linejoin="round"/>
<line x1="1151.2" y1="903.1" x2="1167.05" y2="903.1" stroke="#720303" stroke-width="2" stroke-linecap="butt"/>
<line x1="1262.15" y1="903.1" x2="1278" y2="903.1" stroke="#720303" stroke-width="2" stroke-linecap="butt"/>
<path d="M1167.05 903.1 a11.89 12.3 0 0 1 23.77 0 a11.89 12.3 0 0 1 23.77 0 a11.89 12.3 0 0 1 23.77 0 a11.89 12.3 0 0 1 23.77 0" fill="none" stroke="#720303" stroke-width="3" stroke-linecap="round" stroke-linejoin="round"/>
<line x1="1341.4" y1="903.1" x2="1357.25" y2="903.1" stroke="#720303" stroke-width="2" stroke-linecap="butt"/>
<line x1="1452.35" y1="903.1" x2="1468.2" y2="903.1" stroke="#720303" stroke-width="2" stroke-linecap="butt"/>
<path d="M1357.25 903.1 a11.89 12.3 0 0 1 23.77 0 a11.89 12.3 0 0 1 23.77 0 a11.89 12.3 0 0 1 23.77 0 a11.89 12.3 0 0 1 23.77 0" fill="none" stroke="#720303" stroke-width="3" stroke-linecap="round" stroke-linejoin="round"/>
<line x1="1531.6" y1="903.1" x2="1547.45" y2="903.1" stroke="#720303" stroke-width="2" stroke-linecap="butt"/>
<line x1="1642.55" y1="903.1" x2="1658.4" y2="903.1" stroke="#720303" stroke-width="2" stroke-linecap="butt"/>
<path d="M1547.45 903.1 a11.89 12.3 0 0 1 23.77 0 a11.89 12.3 0 0 1 23.77 0 a11.89 12.3 0 0 1 23.77 0 a11.89 12.3 0 0 1 23.77 0" fill="none" stroke="#720303" stroke-width="3" stroke-linecap="round" stroke-linejoin="round"/>
<line x1="739.1" y1="966.5" x2="739.1" y2="982.35" stroke="#720303" stroke-width="2" stroke-linecap="butt"/>
<line x1="739.1" y1="1077.45" x2="739.1" y2="1093.3" stroke="#720303" stroke-width="2" stroke-linecap="butt"/>
<path d="M739.1 982.35 a12.3 11.89 0 0 0 0 23.77 a12.3 11.89 0 0 0 0 23.77 a12.3 11.89 0 0 0 0 23.77 a12.3 11.89 0 0 0 0 23.77" fill="none" stroke="#720303" stroke-width="3" stroke-linecap="round" stroke-linejoin="round"/>
<line x1="1309.7" y1="1125" x2="1309.7" y2="1140.85" stroke="#720303" stroke-width="2" stroke-linecap="butt"/>
<line x1="1309.7" y1="1235.95" x2="1309.7" y2="1251.8" stroke="#720303" stroke-width="2" stroke-linecap="butt"/>
<path d="M1309.7 1140.85 a12.3 11.89 0 0 0 0 23.77 a12.3 11.89 0 0 0 0 23.77 a12.3 11.89 0 0 0 0 23.77 a12.3 11.89 0 0 0 0 23.77" fill="none" stroke="#720303" stroke-width="3" stroke-linecap="round" stroke-linejoin="round"/>
<line x1="1499.9" y1="1125" x2="1499.9" y2="1140.85" stroke="#720303" stroke-width="2" stroke-linecap="butt"/>
<line x1="1499.9" y1="1235.95" x2="1499.9" y2="1251.8" stroke="#720303" stroke-width="2" stroke-linecap="butt"/>
<path d="M1499.9 1140.85 a12.3 11.89 0 0 0 0 23.77 a12.3 11.89 0 0 0 0 23.77 a12.3 11.89 0 0 0 0 23.77 a12.3 11.89 0 0 0 0 23.77" fill="none" stroke="#720303" stroke-width="3" stroke-linecap="round" stroke-linejoin="round"/>
<line x1="929.3" y1="903.1" x2="1056.1" y2="903.1" stroke="#720303" stroke-width="2" stroke-linecap="butt"/>
<line x1="961" y1="871.4" x2="1024.4" y2="934.8" stroke="#720303" stroke-width="3.3" stroke-linecap="round"/>
<line x1="961" y1="934.8" x2="1024.4" y2="871.4" stroke="#720303" stroke-width="3.3" stroke-linecap="round"/>
<line x1="1309.7" y1="966.5" x2="1309.7" y2="1093.3" stroke="#720303" stroke-width="2" stroke-linecap="butt"/>
<line x1="1278" y1="998.2" x2="1341.4" y2="1061.6" stroke="#720303" stroke-width="3.3" stroke-linecap="round"/>
<line x1="1278" y1="1061.6" x2="1341.4" y2="998.2" stroke="#720303" stroke-width="3.3" stroke-linecap="round"/>
<line x1="1499.9" y1="966.5" x2="1499.9" y2="1093.3" stroke="#720303" stroke-width="2" stroke-linecap="butt"/>
<line x1="1468.2" y1="998.2" x2="1531.6" y2="1061.6" stroke="#720303" stroke-width="3.3" stroke-linecap="round"/>
<line x1="1468.2" y1="1061.6" x2="1531.6" y2="998.2" stroke="#720303" stroke-width="3.3" stroke-linecap="round"/>
<line x1="929.3" y1="1061.6" x2="954.1" y2="1061.6" stroke="#720303" stroke-width="1.95" stroke-linecap="butt"/>
<line x1="1031.3" y1="1061.6" x2="1056.1" y2="1061.6" stroke="#720303" stroke-width="1.95" stroke-linecap="butt"/>
<path d="M954.1 1061.6 L960.5 1048.9 L973.4 1074.3 L986.3 1048.9 L999.1 1074.3 L1012 1048.9 L1024.9 1074.3 L1031.3 1061.6" fill="none" stroke="#720303" stroke-width="2.85" stroke-linejoin="round" stroke-linecap="round"/>
<line x1="1182.9" y1="966.5" x2="1182.9" y2="991.3" stroke="#720303" stroke-width="1.95" stroke-linecap="butt"/>
<line x1="1182.9" y1="1068.5" x2="1182.9" y2="1093.3" stroke="#720303" stroke-width="1.95" stroke-linecap="butt"/>
<path d="M1182.9 991.3 L1195.6 997.7 L1170.2 1010.6 L1195.6 1023.5 L1170.2 1036.3 L1195.6 1049.2 L1170.2 1062.1 L1182.9 1068.5" fill="none" stroke="#720303" stroke-width="2.85" stroke-linejoin="round" stroke-linecap="round"/>
<line x1="1626.7" y1="966.5" x2="1626.7" y2="991.3" stroke="#720303" stroke-width="1.95" stroke-linecap="butt"/>
<line x1="1626.7" y1="1068.5" x2="1626.7" y2="1093.3" stroke="#720303" stroke-width="1.95" stroke-linecap="butt"/>
<path d="M1626.7 991.3 L1639.4 997.7 L1614 1010.6 L1639.4 1023.5 L1614 1036.3 L1639.4 1049.2 L1614 1062.1 L1626.7 1068.5" fill="none" stroke="#720303" stroke-width="2.85" stroke-linejoin="round" stroke-linecap="round"/>
<line x1="739.1" y1="1125" x2="739.1" y2="1156.7" stroke="#720303" stroke-width="2" stroke-linecap="butt"/>
<line x1="715" y1="1156.7" x2="763.2" y2="1156.7" stroke="#720303" stroke-width="3.4" stroke-linecap="round"/>
<text x="713.79" y="1181.2" font-size="23.8" fill="#333333" stroke="#333333" stroke-width="0.3" textLength="50.88" lengthAdjust="spacingAndGlyphs">GND</text>
<line x1="1309.7" y1="1251.8" x2="1309.7" y2="1283.5" stroke="#720303" stroke-width="2" stroke-linecap="butt"/>
<line x1="1285.6" y1="1283.5" x2="1333.8" y2="1283.5" stroke="#720303" stroke-width="3.4" stroke-linecap="round"/>
<text x="1284.39" y="1308" font-size="23.8" fill="#333333" stroke="#333333" stroke-width="0.3" textLength="50.88" lengthAdjust="spacingAndGlyphs">GND</text>
<line x1="1499.9" y1="1251.8" x2="1499.9" y2="1283.5" stroke="#720303" stroke-width="2" stroke-linecap="butt"/>
<line x1="1475.8" y1="1283.5" x2="1524" y2="1283.5" stroke="#720303" stroke-width="3.4" stroke-linecap="round"/>
<text x="1474.59" y="1308" font-size="23.8" fill="#333333" stroke="#333333" stroke-width="0.3" textLength="50.88" lengthAdjust="spacingAndGlyphs">GND</text>
<line x1="1119.5" y1="681.2" x2="1119.5" y2="649.5" stroke="#720303" stroke-width="2" stroke-linecap="butt"/>
<line x1="1095.4" y1="649.5" x2="1143.6" y2="649.5" stroke="#720303" stroke-width="3.4" stroke-linecap="round"/>
<text x="1094.19" y="643.1" font-size="23.8" fill="#333333" stroke="#333333" stroke-width="0.3" textLength="50.78" lengthAdjust="spacingAndGlyphs">GND</text>
<line x1="1499.9" y1="681.2" x2="1499.9" y2="649.5" stroke="#720303" stroke-width="2" stroke-linecap="butt"/>
<line x1="1475.8" y1="649.5" x2="1524" y2="649.5" stroke="#720303" stroke-width="3.4" stroke-linecap="round"/>
<text x="1474.59" y="643.1" font-size="23.8" fill="#333333" stroke="#333333" stroke-width="0.3" textLength="50.78" lengthAdjust="spacingAndGlyphs">GND</text>
<line x1="1119.5" y1="712.9" x2="1119.5" y2="744.6" stroke="#720303" stroke-width="2" stroke-linecap="butt"/>
<line x1="1119.5" y1="808" x2="1119.5" y2="839.7" stroke="#720303" stroke-width="2" stroke-linecap="butt"/>
<circle cx="1119.5" cy="776.3" r="31.7" fill="#ffffdc" stroke="#720303" stroke-width="2.9"/>
<path d="M1111.5 776.3H1127.5M1119.5 768.3V784.3" stroke="#b0b0a0" stroke-width="0.8" opacity="0.6" fill="none"/>
<path d="M1100.4 766.1V786.6M1093.2 779.6L1100.4 786.8L1107.6 779.6" fill="none" stroke="#720303" stroke-width="0.9"/>
<path d="M1119.1 758.1 L1125.3 763.1 L1114.1 769.9 L1137.3 776.3 L1125.9 782.7 L1131.7 787.7 L1119.1 795.1" fill="none" stroke="#720303" stroke-width="2.9" stroke-linejoin="round" stroke-linecap="round"/>
<text font-size="14.3" fill="#3c3c3c" stroke="#3c3c3c" stroke-width="0.22" transform="translate(1134.8,735.82) rotate(-90)">1</text>
<text font-size="14.3" fill="#3c3c3c" stroke="#3c3c3c" stroke-width="0.22" transform="translate(1134.8,824.58) rotate(-90)">2</text>
<g transform="translate(1176.2,765) rotate(-90)">
<text x="-0.6" y="0" font-size="23.8" fill="#101010" stroke="#101010" stroke-width="0.3">I</text>
<path d="M-0.4 -1H7M-0.4 -15.5H7" stroke="#101010" stroke-width="1.9"/>
<text x="8.4" y="0" font-size="23.8" fill="#101010" stroke="#101010" stroke-width="0.3" textLength="10.5" lengthAdjust="spacingAndGlyphs">1</text>
</g>
<path d="M1145.7 744.6H1156.7M1151.2 739.1V750.1" stroke="#9a9a9a" stroke-width="0.8" opacity="0.55" fill="none"/>
<text font-size="14.6" fill="#3c3c3c" stroke="#3c3c3c" stroke-width="0.22" textLength="30.4" lengthAdjust="spacingAndGlyphs" text-anchor="end" transform="translate(1048.8,713.4) rotate(-90)">100n</text>
<text font-size="14.6" fill="#3c3c3c" stroke="#3c3c3c" stroke-width="0.22" textLength="14.6" lengthAdjust="spacingAndGlyphs" text-anchor="end" transform="translate(1067.9,713.4) rotate(-90)">5p</text>
<text font-size="14.6" fill="#3c3c3c" stroke="#3c3c3c" stroke-width="0.22" textLength="6.6" lengthAdjust="spacingAndGlyphs" text-anchor="end" transform="translate(1086,713.4) rotate(-90)">0</text>
<text font-size="14.6" fill="#3c3c3c" stroke="#3c3c3c" stroke-width="0.22" textLength="40.1" lengthAdjust="spacingAndGlyphs" text-anchor="end" transform="translate(1048.8,808.5) rotate(-90)">275µA</text>
<text font-size="14.6" fill="#3c3c3c" stroke="#3c3c3c" stroke-width="0.22" textLength="40.1" lengthAdjust="spacingAndGlyphs" text-anchor="end" transform="translate(1067.9,808.5) rotate(-90)">275µA</text>
<text font-size="14.6" fill="#3c3c3c" stroke="#3c3c3c" stroke-width="0.22" textLength="24.3" lengthAdjust="spacingAndGlyphs" text-anchor="end" transform="translate(1086,808.5) rotate(-90)">0µA</text>
<path d="M1012 712.7H1024M1018 706.7V718.7" stroke="#9a9a9a" stroke-width="0.8" opacity="0.55" fill="none"/>
<path d="M1029.2 712.7H1041.2M1035.2 706.7V718.7" stroke="#9a9a9a" stroke-width="0.8" opacity="0.55" fill="none"/>
<path d="M1046.7 712.7H1058.7M1052.7 706.7V718.7" stroke="#9a9a9a" stroke-width="0.8" opacity="0.55" fill="none"/>
<path d="M1065.9 712.7H1077.9M1071.9 706.7V718.7" stroke="#9a9a9a" stroke-width="0.8" opacity="0.55" fill="none"/>
<path d="M1083.4 712.7H1095.4M1089.4 706.7V718.7" stroke="#9a9a9a" stroke-width="0.8" opacity="0.55" fill="none"/>
<path d="M1012 807.8H1024M1018 801.8V813.8" stroke="#9a9a9a" stroke-width="0.8" opacity="0.55" fill="none"/>
<path d="M1029.2 807.8H1041.2M1035.2 801.8V813.8" stroke="#9a9a9a" stroke-width="0.8" opacity="0.55" fill="none"/>
<path d="M1046.7 807.8H1058.7M1052.7 801.8V813.8" stroke="#9a9a9a" stroke-width="0.8" opacity="0.55" fill="none"/>
<path d="M1065.9 807.8H1077.9M1071.9 801.8V813.8" stroke="#9a9a9a" stroke-width="0.8" opacity="0.55" fill="none"/>
<path d="M1083.4 807.8H1095.4M1089.4 801.8V813.8" stroke="#9a9a9a" stroke-width="0.8" opacity="0.55" fill="none"/>
<line x1="1499.9" y1="712.9" x2="1499.9" y2="744.6" stroke="#720303" stroke-width="2" stroke-linecap="butt"/>
<line x1="1499.9" y1="808" x2="1499.9" y2="839.7" stroke="#720303" stroke-width="2" stroke-linecap="butt"/>
<circle cx="1499.9" cy="776.3" r="31.7" fill="#ffffdc" stroke="#720303" stroke-width="2.9"/>
<path d="M1491.9 776.3H1507.9M1499.9 768.3V784.3" stroke="#b0b0a0" stroke-width="0.8" opacity="0.6" fill="none"/>
<path d="M1480.8 766.1V786.6M1473.6 779.6L1480.8 786.8L1488 779.6" fill="none" stroke="#720303" stroke-width="0.9"/>
<path d="M1499.5 758.1 L1505.7 763.1 L1494.5 769.9 L1517.7 776.3 L1506.3 782.7 L1512.1 787.7 L1499.5 795.1" fill="none" stroke="#720303" stroke-width="2.9" stroke-linejoin="round" stroke-linecap="round"/>
<text font-size="14.3" fill="#3c3c3c" stroke="#3c3c3c" stroke-width="0.22" transform="translate(1515.2,735.82) rotate(-90)">1</text>
<text font-size="14.3" fill="#3c3c3c" stroke="#3c3c3c" stroke-width="0.22" transform="translate(1515.2,824.58) rotate(-90)">2</text>
<g transform="translate(1556.6,765) rotate(-90)">
<text x="-0.6" y="0" font-size="23.8" fill="#101010" stroke="#101010" stroke-width="0.3">I</text>
<path d="M-0.4 -1H7M-0.4 -15.5H7" stroke="#101010" stroke-width="1.9"/>
<text x="8.4" y="0" font-size="23.8" fill="#101010" stroke="#101010" stroke-width="0.3" textLength="10.5" lengthAdjust="spacingAndGlyphs">2</text>
</g>
<path d="M1526.1 744.6H1537.1M1531.6 739.1V750.1" stroke="#9a9a9a" stroke-width="0.8" opacity="0.55" fill="none"/>
<text font-size="14.6" fill="#3c3c3c" stroke="#3c3c3c" stroke-width="0.22" textLength="30.4" lengthAdjust="spacingAndGlyphs" text-anchor="end" transform="translate(1429.2,713.4) rotate(-90)">100n</text>
<text font-size="14.6" fill="#3c3c3c" stroke="#3c3c3c" stroke-width="0.22" textLength="14.6" lengthAdjust="spacingAndGlyphs" text-anchor="end" transform="translate(1448.3,713.4) rotate(-90)">5p</text>
<text font-size="14.6" fill="#3c3c3c" stroke="#3c3c3c" stroke-width="0.22" textLength="6.6" lengthAdjust="spacingAndGlyphs" text-anchor="end" transform="translate(1466.4,713.4) rotate(-90)">0</text>
<text font-size="14.6" fill="#3c3c3c" stroke="#3c3c3c" stroke-width="0.22" textLength="40.1" lengthAdjust="spacingAndGlyphs" text-anchor="end" transform="translate(1429.2,808.5) rotate(-90)">175µA</text>
<text font-size="14.6" fill="#3c3c3c" stroke="#3c3c3c" stroke-width="0.22" textLength="40.1" lengthAdjust="spacingAndGlyphs" text-anchor="end" transform="translate(1448.3,808.5) rotate(-90)">175µA</text>
<text font-size="14.6" fill="#3c3c3c" stroke="#3c3c3c" stroke-width="0.22" textLength="24.3" lengthAdjust="spacingAndGlyphs" text-anchor="end" transform="translate(1466.4,808.5) rotate(-90)">0µA</text>
<path d="M1392.4 712.7H1404.4M1398.4 706.7V718.7" stroke="#9a9a9a" stroke-width="0.8" opacity="0.55" fill="none"/>
<path d="M1409.6 712.7H1421.6M1415.6 706.7V718.7" stroke="#9a9a9a" stroke-width="0.8" opacity="0.55" fill="none"/>
<path d="M1427.1 712.7H1439.1M1433.1 706.7V718.7" stroke="#9a9a9a" stroke-width="0.8" opacity="0.55" fill="none"/>
<path d="M1446.3 712.7H1458.3M1452.3 706.7V718.7" stroke="#9a9a9a" stroke-width="0.8" opacity="0.55" fill="none"/>
<path d="M1463.8 712.7H1475.8M1469.8 706.7V718.7" stroke="#9a9a9a" stroke-width="0.8" opacity="0.55" fill="none"/>
<path d="M1392.4 807.8H1404.4M1398.4 801.8V813.8" stroke="#9a9a9a" stroke-width="0.8" opacity="0.55" fill="none"/>
<path d="M1409.6 807.8H1421.6M1415.6 801.8V813.8" stroke="#9a9a9a" stroke-width="0.8" opacity="0.55" fill="none"/>
<path d="M1427.1 807.8H1439.1M1433.1 801.8V813.8" stroke="#9a9a9a" stroke-width="0.8" opacity="0.55" fill="none"/>
<path d="M1446.3 807.8H1458.3M1452.3 801.8V813.8" stroke="#9a9a9a" stroke-width="0.8" opacity="0.55" fill="none"/>
<path d="M1463.8 807.8H1475.8M1469.8 801.8V813.8" stroke="#9a9a9a" stroke-width="0.8" opacity="0.55" fill="none"/>
<circle cx="739.1" cy="903.1" r="7.6" fill="#1b7b09"/>
<circle cx="929.3" cy="903.1" r="7.6" fill="#1b7b09"/>
<circle cx="1056.1" cy="903.1" r="7.6" fill="#1b7b09"/>
<circle cx="1119.5" cy="903.1" r="7.6" fill="#1b7b09"/>
<circle cx="1309.7" cy="903.1" r="7.6" fill="#1b7b09"/>
<circle cx="1499.9" cy="903.1" r="7.6" fill="#1b7b09"/>
<circle cx="1309.7" cy="966.5" r="7.6" fill="#1b7b09"/>
<circle cx="1309.7" cy="1093.3" r="7.6" fill="#1b7b09"/>
<circle cx="1499.9" cy="966.5" r="7.6" fill="#1b7b09"/>
<circle cx="1499.9" cy="1093.3" r="7.6" fill="#1b7b09"/>
<text x="605.29" y="884.2" font-size="23.8" fill="#101010" stroke="#101010" stroke-width="0.3" textLength="25.39" lengthAdjust="spacingAndGlyphs">L0</text>
<text x="604.49" y="933.1" font-size="23.8" fill="#3c3c3c" stroke="#3c3c3c" stroke-width="0.3" textLength="64.69" lengthAdjust="spacingAndGlyphs">0.1pH</text>
<text x="795.49" y="884.2" font-size="23.8" fill="#101010" stroke="#101010" stroke-width="0.3" textLength="25.68" lengthAdjust="spacingAndGlyphs">L2</text>
<text x="794.99" y="933.1" font-size="23.8" fill="#3c3c3c" stroke="#3c3c3c" stroke-width="0.3" textLength="91.48" lengthAdjust="spacingAndGlyphs">0.604pH</text>
<text x="1208.39" y="883.9" font-size="23.8" fill="#101010" stroke="#101010" stroke-width="0.3" textLength="25.68" lengthAdjust="spacingAndGlyphs">L3</text>
<text x="1177.09" y="933.1" font-size="23.8" fill="#3c3c3c" stroke="#3c3c3c" stroke-width="0.3" textLength="89.58" lengthAdjust="spacingAndGlyphs">1.126pH</text>
<text x="1366.69" y="883.9" font-size="23.8" fill="#101010" stroke="#101010" stroke-width="0.3" textLength="25.39" lengthAdjust="spacingAndGlyphs">L4</text>
<text x="1365.39" y="933.1" font-size="23.8" fill="#3c3c3c" stroke="#3c3c3c" stroke-width="0.3" textLength="77.19" lengthAdjust="spacingAndGlyphs">4.84pH</text>
<text x="1588.79" y="883.9" font-size="23.8" fill="#101010" stroke="#101010" stroke-width="0.3" textLength="25.48" lengthAdjust="spacingAndGlyphs">L5</text>
<text x="1555.99" y="933.1" font-size="23.8" fill="#3c3c3c" stroke="#3c3c3c" stroke-width="0.3" textLength="77.38" lengthAdjust="spacingAndGlyphs">2.08pH</text>
<text x="694.69" y="1029.7" font-size="23.8" fill="#101010" stroke="#101010" stroke-width="0.3" textLength="22.48" lengthAdjust="spacingAndGlyphs">L1</text>
<text x="743.29" y="1092.8" font-size="23.8" fill="#3c3c3c" stroke="#3c3c3c" stroke-width="0.3" textLength="64.08" lengthAdjust="spacingAndGlyphs">3.1pH</text>
<path d="M995.9 848.2V864.8C995.9 867.6 993.9 868.5 991.2 867.7M1002.3 848.2V864.8C1002.3 867.6 1000.3 868.5 997.6 867.7" fill="none" stroke="#101010" stroke-width="2.15" stroke-linecap="butt"/>
<text x="1005.79" y="864.6" font-size="23.8" fill="#101010" stroke="#101010" stroke-width="0.3" textLength="11.99" lengthAdjust="spacingAndGlyphs">1</text>
<path d="M964 967.9V984.5C964 987.3 962 988.2 959.3 987.4M970.4 967.9V984.5C970.4 987.3 968.4 988.2 965.7 987.4" fill="none" stroke="#3c3c3c" stroke-width="2.15" stroke-linecap="butt"/>
<text x="973.89" y="984.3" font-size="23.8" fill="#3c3c3c" stroke="#3c3c3c" stroke-width="0.3" textLength="39.08" lengthAdjust="spacingAndGlyphs">225</text>
<text x="954.89" y="1041.6" font-size="23.8" fill="#101010" stroke="#101010" stroke-width="0.3" textLength="40.28" lengthAdjust="spacingAndGlyphs">RB1</text>
<text x="954.89" y="1098.7" font-size="23.8" fill="#3c3c3c" stroke="#3c3c3c" stroke-width="0.3" textLength="63.68" lengthAdjust="spacingAndGlyphs">1,14Ω</text>
<path d="M1249.6 1008.4V1025C1249.6 1027.8 1247.6 1028.7 1244.9 1027.9M1256 1008.4V1025C1256 1027.8 1254 1028.7 1251.3 1027.9" fill="none" stroke="#101010" stroke-width="2.15" stroke-linecap="butt"/>
<text x="1259.49" y="1024.8" font-size="23.8" fill="#101010" stroke="#101010" stroke-width="0.3" textLength="12.79" lengthAdjust="spacingAndGlyphs">2</text>
<path d="M1337.8 1069.1V1085.7C1337.8 1088.5 1335.8 1089.4 1333.1 1088.6M1344.2 1069.1V1085.7C1344.2 1088.5 1342.2 1089.4 1339.5 1088.6" fill="none" stroke="#3c3c3c" stroke-width="2.15" stroke-linecap="butt"/>
<text x="1347.69" y="1085.5" font-size="23.8" fill="#3c3c3c" stroke="#3c3c3c" stroke-width="0.3" textLength="38.48" lengthAdjust="spacingAndGlyphs">225</text>
<path d="M1439.6 1008.4V1025C1439.6 1027.8 1437.6 1028.7 1434.9 1027.9M1446 1008.4V1025C1446 1027.8 1444 1028.7 1441.3 1027.9" fill="none" stroke="#101010" stroke-width="2.15" stroke-linecap="butt"/>
<text x="1449.49" y="1024.8" font-size="23.8" fill="#101010" stroke="#101010" stroke-width="0.3" textLength="12.38" lengthAdjust="spacingAndGlyphs">3</text>
<path d="M1528 1069.1V1085.7C1528 1088.5 1526 1089.4 1523.3 1088.6M1534.4 1069.1V1085.7C1534.4 1088.5 1532.4 1089.4 1529.7 1088.6" fill="none" stroke="#3c3c3c" stroke-width="2.15" stroke-linecap="butt"/>
<text x="1537.89" y="1085.5" font-size="23.8" fill="#3c3c3c" stroke="#3c3c3c" stroke-width="0.3" textLength="38.58" lengthAdjust="spacingAndGlyphs">250</text>
<text x="1233.69" y="1188.1" font-size="23.8" fill="#101010" stroke="#101010" stroke-width="0.3" textLength="39.78" lengthAdjust="spacingAndGlyphs">L2p</text>
<text x="1314.69" y="1251" font-size="23.8" fill="#3c3c3c" stroke="#3c3c3c" stroke-width="0.3" textLength="77.38" lengthAdjust="spacingAndGlyphs">0.01pH</text>
<text x="1423.99" y="1188.1" font-size="23.8" fill="#101010" stroke="#101010" stroke-width="0.3" textLength="39.68" lengthAdjust="spacingAndGlyphs">L3p</text>
<text x="1504.89" y="1251" font-size="23.8" fill="#3c3c3c" stroke="#3c3c3c" stroke-width="0.3" textLength="77.48" lengthAdjust="spacingAndGlyphs">0.01pH</text>
<text font-size="23.8" fill="#101010" stroke="#101010" stroke-width="0.3" textLength="40.28" lengthAdjust="spacingAndGlyphs" transform="translate(1164.5,1066.21) rotate(-90)">RB2</text>
<text font-size="23.8" fill="#3c3c3c" stroke="#3c3c3c" stroke-width="0.3" textLength="62.78" lengthAdjust="spacingAndGlyphs" transform="translate(1221,1066.21) rotate(-90)">1,14Ω</text>
<text font-size="23.8" fill="#101010" stroke="#101010" stroke-width="0.3" textLength="40.08" lengthAdjust="spacingAndGlyphs" transform="translate(1607.8,1066.01) rotate(-90)">RB3</text>
<text font-size="23.8" fill="#3c3c3c" stroke="#3c3c3c" stroke-width="0.3" textLength="75.28" lengthAdjust="spacingAndGlyphs" transform="translate(1665.7,1066.01) rotate(-90)">1,024Ω</text>
<path d="M599.5 908.1H610.5M605 902.6V913.6" stroke="#9a9a9a" stroke-width="0.8" opacity="0.55" fill="none"/>
<path d="M636 903.1H652" stroke="#9a9a9a" stroke-width="0.8" opacity="0.5"/>
<path d="M789.7 908.1H800.7M795.2 902.6V913.6" stroke="#9a9a9a" stroke-width="0.8" opacity="0.55" fill="none"/>
<path d="M826.2 903.1H842.2" stroke="#9a9a9a" stroke-width="0.8" opacity="0.5"/>
<path d="M1170.1 908.1H1181.1M1175.6 902.6V913.6" stroke="#9a9a9a" stroke-width="0.8" opacity="0.55" fill="none"/>
<path d="M1206.6 903.1H1222.6" stroke="#9a9a9a" stroke-width="0.8" opacity="0.5"/>
<path d="M1360.3 908.1H1371.3M1365.8 902.6V913.6" stroke="#9a9a9a" stroke-width="0.8" opacity="0.55" fill="none"/>
<path d="M1396.8 903.1H1412.8" stroke="#9a9a9a" stroke-width="0.8" opacity="0.5"/>
<path d="M1550.5 908.1H1561.5M1556 902.6V913.6" stroke="#9a9a9a" stroke-width="0.8" opacity="0.55" fill="none"/>
<path d="M1587 903.1H1603" stroke="#9a9a9a" stroke-width="0.8" opacity="0.5"/>
<path d="M599.5 890.6H610.5M605 885.1V896.1" stroke="#9a9a9a" stroke-width="0.8" opacity="0.55" fill="none"/>
<path d="M789.7 890.6H800.7M795.2 885.1V896.1" stroke="#9a9a9a" stroke-width="0.8" opacity="0.55" fill="none"/>
<path d="M1210.6 889.1H1221.6M1216.1 883.6V894.6" stroke="#9a9a9a" stroke-width="0.8" opacity="0.55" fill="none"/>
<path d="M1591 889.1H1602M1596.5 883.6V894.6" stroke="#9a9a9a" stroke-width="0.8" opacity="0.55" fill="none"/>
<path d="M1360.3 889.1H1371.3M1365.8 883.6V894.6" stroke="#9a9a9a" stroke-width="0.8" opacity="0.55" fill="none"/>
<path d="M689.22 1036.24H700.22M694.72 1030.74V1041.74" stroke="#9a9a9a" stroke-width="0.8" opacity="0.55" fill="none"/>
<path d="M739.94 1067.94H750.94M745.44 1062.44V1073.44" stroke="#9a9a9a" stroke-width="0.8" opacity="0.55" fill="none"/>
<path d="M955.5 960.16H966.5M961 954.66V965.66" stroke="#9a9a9a" stroke-width="0.8" opacity="0.55" fill="none"/>
<path d="M949.16 1048.92H960.16M954.66 1043.42V1054.42" stroke="#9a9a9a" stroke-width="0.8" opacity="0.55" fill="none"/>
<path d="M949.16 1074.28H960.16M954.66 1068.78V1079.78" stroke="#9a9a9a" stroke-width="0.8" opacity="0.55" fill="none"/>
<path d="M987.2 871.4H998.2M992.7 865.9V876.9" stroke="#9a9a9a" stroke-width="0.8" opacity="0.55" fill="none"/>
<path d="M1202.76 1029.9H1213.76M1208.26 1024.4V1035.4" stroke="#9a9a9a" stroke-width="0.8" opacity="0.55" fill="none"/>
<path d="M1164.72 1067.94H1175.72M1170.22 1062.44V1073.44" stroke="#9a9a9a" stroke-width="0.8" opacity="0.55" fill="none"/>
<path d="M1190.08 1067.94H1201.08M1195.58 1062.44V1073.44" stroke="#9a9a9a" stroke-width="0.8" opacity="0.55" fill="none"/>
<path d="M1329.56 1061.6H1340.56M1335.06 1056.1V1067.1" stroke="#9a9a9a" stroke-width="0.8" opacity="0.55" fill="none"/>
<path d="M1243.97 1029.9H1254.97M1249.47 1024.4V1035.4" stroke="#9a9a9a" stroke-width="0.8" opacity="0.55" fill="none"/>
<path d="M1434.17 1029.9H1445.17M1439.67 1024.4V1035.4" stroke="#9a9a9a" stroke-width="0.8" opacity="0.55" fill="none"/>
<path d="M1608.52 1067.94H1619.52M1614.02 1062.44V1073.44" stroke="#9a9a9a" stroke-width="0.8" opacity="0.55" fill="none"/>
<path d="M1633.88 1067.94H1644.88M1639.38 1062.44V1073.44" stroke="#9a9a9a" stroke-width="0.8" opacity="0.55" fill="none"/>
<path d="M1519.76 1061.6H1530.76M1525.26 1056.1V1067.1" stroke="#9a9a9a" stroke-width="0.8" opacity="0.55" fill="none"/>
<path d="M1228.12 1194.74H1239.12M1233.62 1189.24V1200.24" stroke="#9a9a9a" stroke-width="0.8" opacity="0.55" fill="none"/>
<path d="M1310.54 1226.44H1321.54M1316.04 1220.94V1231.94" stroke="#9a9a9a" stroke-width="0.8" opacity="0.55" fill="none"/>
<path d="M1418.32 1194.74H1429.32M1423.82 1189.24V1200.24" stroke="#9a9a9a" stroke-width="0.8" opacity="0.55" fill="none"/>
<path d="M1500.74 1226.44H1511.74M1506.24 1220.94V1231.94" stroke="#9a9a9a" stroke-width="0.8" opacity="0.55" fill="none"/>
</g>
<rect x="1876.8" y="1340.6" width="20" height="20" fill="#fff"/>
<rect x="1881.8" y="754.8" width="11.1" height="68.5" rx="5.55" fill="#6b6b6b"/>
<rect x="1056.9" y="1346" width="125.6" height="10.9" rx="5.45" fill="#6b6b6b"/>
<rect x="1896.8" y="213.8" width="1.8" height="1148" fill="#a9a9a9"/>
<rect x="1898.4" y="213.8" width="221" height="28.5" fill="#e8e8e8"/>
<rect x="1898.4" y="242.3" width="221" height="3.5" fill="url(#hb)"/>
<rect x="1898.6" y="245.8" width="221" height="1104.4" fill="#fff"/>
<rect x="1898.6" y="1350.2" width="221" height="1" fill="#b5b5b5"/>
<rect x="1898.6" y="1351.2" width="221" height="10" fill="#e4e4e4"/>
<circle cx="1910.8" cy="227.8" r="9.6" fill="#4a4a4a"/><path d="M1906.5 223.5L1915.1 232.1M1915.1 223.5L1906.5 232.1" stroke="#fff" stroke-width="2.6" stroke-linecap="round"/>
<circle cx="1935.7" cy="227.8" r="9.5" fill="#505050"/><rect x="1933.6" y="223.9" width="6.6" height="5.2" fill="none" stroke="#fff" stroke-width="1.3"/><rect x="1931" y="226.6" width="6.6" height="5.2" fill="#505050" stroke="#fff" stroke-width="1.3"/>
<text x="2005.05" y="234.8" font-size="15" fill="#1c1c1c" stroke="#1c1c1c" stroke-width="0.15" textLength="54.92" lengthAdjust="spacingAndGlyphs">ERC [2]</text>
<path d="M1911.6 248.8L1921.6 266.2L1901.6 266.2Z" fill="#f08a24" stroke="#d9680c" stroke-width="2.2" stroke-linejoin="round"/>
<path d="M1911.6 253.3L1918 264.4L1905.2 264.4Z" fill="#f9b06a" opacity="0.8"/>
<path d="M1911.6 255.4V260.8" stroke="#222" stroke-width="1.5"/><circle cx="1911.6" cy="263" r="0.95" fill="#222"/>
<text x="1927.48" y="263.9" font-size="17.2" fill="#000" stroke="#000" stroke-width="0.15" textLength="116.69" lengthAdjust="spacingAndGlyphs">Less than two</text>
<text x="2049.3" y="263.9" font-size="17.2" fill="#000" stroke="#000" stroke-width="0.15">p</text>
<rect x="2051.5" y="245.8" width="70" height="23.7" fill="#fff"/>
<rect x="2055.8" y="246.4" width="30.4" height="22.2" fill="url(#btn)" stroke="#a4a4a4" stroke-width="1"/>
<rect x="2087.6" y="246.4" width="29.4" height="22.2" fill="url(#btn)" stroke="#a4a4a4" stroke-width="1"/>
<path d="M2067 259.2L2069.6 262L2074.4 255.4" fill="none" stroke="#111" stroke-width="2"/>
<text x="2102.2" y="262.8" font-size="11.5" fill="#111" text-anchor="middle">?</text>
<path d="M1911.6 272.5L1921.6 289.9L1901.6 289.9Z" fill="#f08a24" stroke="#d9680c" stroke-width="2.2" stroke-linejoin="round"/>
<path d="M1911.6 277L1918 288.1L1905.2 288.1Z" fill="#f9b06a" opacity="0.8"/>
<path d="M1911.6 279.1V284.5" stroke="#222" stroke-width="1.5"/><circle cx="1911.6" cy="286.7" r="0.95" fill="#222"/>
<text x="1927.48" y="287.6" font-size="17.2" fill="#000" stroke="#000" stroke-width="0.15" textLength="116.69" lengthAdjust="spacingAndGlyphs">Less than two</text>
<text x="2049.3" y="287.6" font-size="17.2" fill="#000" stroke="#000" stroke-width="0.15">p</text>
<rect x="2051.5" y="269.5" width="70" height="23.7" fill="#fff"/>
<rect x="2055.8" y="270.1" width="30.4" height="22.2" fill="url(#btn)" stroke="#a4a4a4" stroke-width="1"/>
<rect x="2087.6" y="270.1" width="29.4" height="22.2" fill="url(#btn)" stroke="#a4a4a4" stroke-width="1"/>
<path d="M2067 282.9L2069.6 285.7L2074.4 279.1" fill="none" stroke="#111" stroke-width="2"/>
<text x="2102.2" y="286.5" font-size="11.5" fill="#111" text-anchor="middle">?</text>
<rect x="78.2" y="1361" width="2040.6" height="1.4" fill="#8e8e8e"/>
<rect x="78.2" y="1362.4" width="2040.6" height="42" fill="#e7e7e7"/>
<text x="1539.46" y="1389.2" font-size="18" fill="#111" stroke="#111" stroke-width="0.2" textLength="17.35" lengthAdjust="spacingAndGlyphs">X:</text>
<text x="1591.46" y="1389.2" font-size="18" fill="#111" stroke="#111" stroke-width="0.2" textLength="81.35" lengthAdjust="spacingAndGlyphs">5.228mm</text>
<text x="1681.86" y="1389.2" font-size="18" fill="#111" stroke="#111" stroke-width="0.2" textLength="16.75" lengthAdjust="spacingAndGlyphs">Y:</text>
<text x="1728.66" y="1389.2" font-size="18" fill="#111" stroke="#111" stroke-width="0.2" textLength="88.45" lengthAdjust="spacingAndGlyphs">-2.002mm</text>
</g>
</svg>
</body></html>
